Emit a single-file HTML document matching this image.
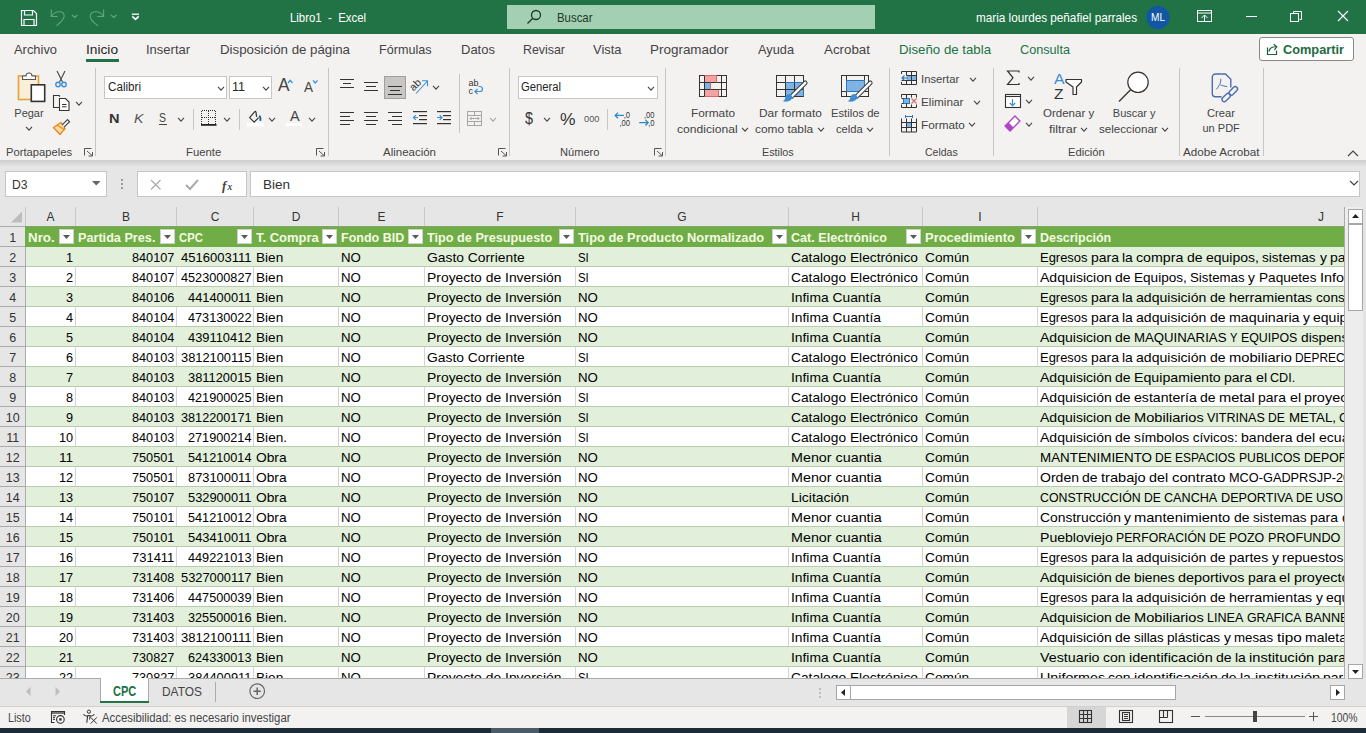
<!DOCTYPE html>
<html><head><meta charset="utf-8"><title>Libro1 - Excel</title>
<style>
html,body{margin:0;padding:0;width:1366px;height:733px;overflow:hidden;background:#F3F2F1;}
body{position:relative;font-family:"Liberation Sans",sans-serif;}
.r{position:absolute;}
.t{position:absolute;white-space:pre;line-height:1;transform-origin:0 0;}
.s{position:absolute;overflow:visible;}
</style></head><body>
<div class="r" style="left:0px;top:0px;width:1366px;height:34px;background:#217346;"></div>
<div class="r" style="left:0px;top:34px;width:1366px;height:126px;background:#F3F2F1;"></div>
<div class="r" style="left:0px;top:160px;width:1366px;height:66px;background:#E6E6E6;"></div>
<div class="r" style="left:0px;top:160px;width:1366px;height:7px;background:linear-gradient(#CDCDCD,#E6E6E6);"></div>
<div class="t" style="left:290.00px;top:10.50px;font-size:13px;color:#FFFFFF;transform:scaleX(0.8765);">Libro1  -  Excel</div>
<div class="r" style="left:507px;top:5px;width:368px;height:24px;background:#A3CFB3;"></div>
<svg class="s" style="left:526px;top:9px;" width="16" height="16" viewBox="0 0 16 16"><circle cx="10" cy="6" r="4.5" fill="none" stroke="#1E3B28" stroke-width="1.3"/><line x1="6.8" y1="9.2" x2="1.5" y2="14.5" stroke="#1E3B28" stroke-width="1.3"/></svg>
<div class="t" style="left:557.00px;top:10.50px;font-size:13px;color:#1E3B28;transform:scaleX(0.8774);">Buscar</div>
<div class="t" style="left:976.00px;top:11.00px;font-size:13px;color:#FFFFFF;transform:scaleX(0.9020);">maria lourdes peñafiel parrales</div>
<svg class="s" style="left:1146px;top:5px;" width="25" height="25" viewBox="0 0 25 25"><circle cx="12" cy="12.6" r="11.7" fill="#1257A3"/></svg>
<div class="t" style="left:1151.00px;top:11.89px;font-size:11px;color:#FFFFFF;transform:scaleX(0.9161);">ML</div>
<svg class="s" style="left:20px;top:9px;" width="18" height="18" viewBox="0 0 18 18"><path d="M1.5 1.5h12l3 3v12h-15z" fill="none" stroke="#fff" stroke-width="1.2"/><path d="M4.5 1.5v4.5h8v-4.5" fill="none" stroke="#fff" stroke-width="1.2"/><path d="M4 16.5v-6h10v6" fill="none" stroke="#fff" stroke-width="1.2"/></svg>
<svg class="s" style="left:50px;top:9px;" width="30" height="18" viewBox="0 0 30 18"><path d="M1.3 0.6V7.5H7.7" fill="none" stroke="#62A67F" stroke-width="1.1"/><path d="M1.8 7C5 1.5 14 1 14.2 7C14.3 10 10 14 6.5 16.8" fill="none" stroke="#62A67F" stroke-width="1.1"/><path d="M22 6l2.7 2.5l2.7-2.5" fill="none" stroke="#62A67F" stroke-width="1.2"/></svg>
<svg class="s" style="left:89px;top:9px;" width="30" height="18" viewBox="0 0 30 18"><path d="M14.6 0.6V7.5H8.3" fill="none" stroke="#62A67F" stroke-width="1.1"/><path d="M14.1 7C11 1.5 2 1 1.2 7C1.1 10 5 14 9 16.8" fill="none" stroke="#62A67F" stroke-width="1.1"/><path d="M22 6l2.7 2.5l2.7-2.5" fill="none" stroke="#62A67F" stroke-width="1.2"/></svg>
<svg class="s" style="left:130px;top:11px;" width="12" height="12" viewBox="0 0 12 12"><line x1="1.8" y1="3.2" x2="9" y2="3.2" stroke="#fff" stroke-width="1.3"/><path d="M2.3 5.3l3.2 3l3.2-3" fill="none" stroke="#fff" stroke-width="1.6"/></svg>
<svg class="s" style="left:1197px;top:10px;" width="16" height="13" viewBox="0 0 16 13"><rect x="0.5" y="0.5" width="14" height="11" fill="none" stroke="#fff" stroke-width="1"/><line x1="0.5" y1="3" x2="14.5" y2="3" stroke="#fff"/><path d="M4.5 8l3-3l3 3M7.5 5v6" fill="none" stroke="#fff" stroke-width="1"/></svg>
<div class="r" style="left:1246px;top:16px;width:11px;height:1px;background:#fff;"></div>
<svg class="s" style="left:1290px;top:10px;" width="13" height="13" viewBox="0 0 13 13"><rect x="0.5" y="3.5" width="8" height="8" fill="none" stroke="#fff"/><path d="M3.5 3.5v-2h8v8h-2" fill="none" stroke="#fff"/></svg>
<svg class="s" style="left:1337px;top:10px;" width="12" height="12" viewBox="0 0 12 12"><path d="M1 1l10 10M11 1l-10 10" stroke="#fff" stroke-width="1.2"/></svg>
<div class="t" style="left:14.00px;top:43.00px;font-size:13px;color:#444444;transform:scaleX(0.9919);">Archivo</div>
<div class="t" style="left:86.00px;top:43.00px;font-size:13px;color:#262626;transform:scaleX(1.0544);">Inicio</div>
<div class="t" style="left:146.00px;top:43.00px;font-size:13px;color:#444444;">Insertar</div>
<div class="t" style="left:220.00px;top:43.00px;font-size:13px;color:#444444;transform:scaleX(1.0220);">Disposición de página</div>
<div class="t" style="left:379.00px;top:43.00px;font-size:13px;color:#444444;transform:scaleX(0.9690);">Fórmulas</div>
<div class="t" style="left:461.00px;top:43.00px;font-size:13px;color:#444444;">Datos</div>
<div class="t" style="left:523.00px;top:43.00px;font-size:13px;color:#444444;transform:scaleX(0.9531);">Revisar</div>
<div class="t" style="left:593.00px;top:43.00px;font-size:13px;color:#444444;transform:scaleX(0.9942);">Vista</div>
<div class="t" style="left:650.00px;top:43.00px;font-size:13px;color:#444444;transform:scaleX(1.0346);">Programador</div>
<div class="t" style="left:758.00px;top:43.00px;font-size:13px;color:#444444;transform:scaleX(0.9829);">Ayuda</div>
<div class="t" style="left:824.00px;top:43.00px;font-size:13px;color:#444444;transform:scaleX(1.0267);">Acrobat</div>
<div class="t" style="left:899.00px;top:43.00px;font-size:13px;color:#217346;transform:scaleX(1.0184);">Diseño de tabla</div>
<div class="t" style="left:1020.00px;top:43.00px;font-size:13px;color:#217346;transform:scaleX(0.9745);">Consulta</div>
<div class="r" style="left:86px;top:59px;width:33px;height:3px;background:#217346;"></div>
<div class="r" style="left:1259px;top:37px;width:95px;height:24px;background:#FFFFFF;border:1px solid #8A8886;border-radius:3px;box-sizing:border-box;"></div>
<svg class="s" style="left:1266px;top:43px;" width="14" height="13" viewBox="0 0 14 13"><path d="M1.5 4.5v7h9v-4" fill="none" stroke="#1E5E3A" stroke-width="1.2"/><path d="M3 8.5C3.5 5 6 3.5 10.5 3.8M7.8 1.2l3 2.6-2.4 3" fill="none" stroke="#1E5E3A" stroke-width="1.2"/></svg>
<div class="t" style="left:1283.00px;top:42.87px;font-size:13.5px;color:#1E6B42;font-weight:bold;transform:scaleX(0.9456);">Compartir</div>
<div class="r" style="left:95px;top:68px;width:1px;height:88px;background:#C8C6C4;"></div>
<div class="r" style="left:328px;top:68px;width:1px;height:88px;background:#C8C6C4;"></div>
<div class="r" style="left:509px;top:68px;width:1px;height:88px;background:#C8C6C4;"></div>
<div class="r" style="left:665px;top:68px;width:1px;height:88px;background:#C8C6C4;"></div>
<div class="r" style="left:889px;top:68px;width:1px;height:88px;background:#C8C6C4;"></div>
<div class="r" style="left:993px;top:68px;width:1px;height:88px;background:#C8C6C4;"></div>
<div class="r" style="left:1179px;top:68px;width:1px;height:88px;background:#C8C6C4;"></div>
<div class="r" style="left:1263px;top:68px;width:1px;height:88px;background:#C8C6C4;"></div>
<div class="t" style="left:6.40px;top:146.89px;font-size:11px;color:#444444;transform:scaleX(1.0181);">Portapapeles</div>
<div class="t" style="left:185.50px;top:146.89px;font-size:11px;color:#444444;transform:scaleX(1.0278);">Fuente</div>
<div class="t" style="left:383.40px;top:146.89px;font-size:11px;color:#444444;transform:scaleX(1.0442);">Alineación</div>
<div class="t" style="left:559.60px;top:146.89px;font-size:11px;color:#444444;transform:scaleX(1.0096);">Número</div>
<div class="t" style="left:761.60px;top:146.89px;font-size:11px;color:#444444;transform:scaleX(0.9753);">Estilos</div>
<div class="t" style="left:924.60px;top:146.89px;font-size:11px;color:#444444;transform:scaleX(0.9550);">Celdas</div>
<div class="t" style="left:1067.60px;top:146.89px;font-size:11px;color:#444444;transform:scaleX(1.0200);">Edición</div>
<div class="t" style="left:1183.40px;top:146.89px;font-size:11px;color:#444444;transform:scaleX(1.0586);">Adobe Acrobat</div>
<svg class="s" style="left:84px;top:148px;" width="9" height="8" viewBox="0 0 9 8"><path d="M0.5 7.5V0.5H7.5" fill="none" stroke="#555" stroke-width="1"/><path d="M3 3L8 7.5M8.5 4v4h-4" fill="none" stroke="#555" stroke-width="1"/></svg>
<svg class="s" style="left:316px;top:148px;" width="9" height="8" viewBox="0 0 9 8"><path d="M0.5 7.5V0.5H7.5" fill="none" stroke="#555" stroke-width="1"/><path d="M3 3L8 7.5M8.5 4v4h-4" fill="none" stroke="#555" stroke-width="1"/></svg>
<svg class="s" style="left:498px;top:148px;" width="9" height="8" viewBox="0 0 9 8"><path d="M0.5 7.5V0.5H7.5" fill="none" stroke="#555" stroke-width="1"/><path d="M3 3L8 7.5M8.5 4v4h-4" fill="none" stroke="#555" stroke-width="1"/></svg>
<svg class="s" style="left:654px;top:148px;" width="9" height="8" viewBox="0 0 9 8"><path d="M0.5 7.5V0.5H7.5" fill="none" stroke="#555" stroke-width="1"/><path d="M3 3L8 7.5M8.5 4v4h-4" fill="none" stroke="#555" stroke-width="1"/></svg>
<svg class="s" style="left:1347px;top:150px;" width="12" height="7" viewBox="0 0 12 7"><path d="M1 6L6 1L11 6" fill="none" stroke="#444" stroke-width="1.2"/></svg>
<svg class="s" style="left:17px;top:71px;" width="30" height="32" viewBox="0 0 30 32">
<rect x="1.5" y="5" width="20" height="23.5" fill="#FCEFD9" stroke="#E4A23B" stroke-width="1.6"/>
<path d="M5.5 8.5V5h3.5a3 3 0 0 1 6 0h3.5v3.5z" fill="#FFFFFF" stroke="#555" stroke-width="1.1"/>
<rect x="14.3" y="13.8" width="13.4" height="16.6" fill="#FFFFFF" stroke="#333" stroke-width="1.6"/></svg>
<div class="t" style="left:14.30px;top:107.89px;font-size:11px;color:#444444;">Pegar</div>
<svg class="s" style="left:24.7px;top:126px;" width="8" height="5.2" viewBox="0 0 8 5.2"><path d="M1 1L4.0 4.2L7 1" fill="none" stroke="#444444" stroke-width="1.1"/></svg>
<svg class="s" style="left:54px;top:70px;" width="14" height="18" viewBox="0 0 14 18"><path d="M3 1L8.5 12M11 1L5.5 12" stroke="#444" stroke-width="1.1" fill="none"/>
<circle cx="4" cy="14.5" r="2.2" fill="none" stroke="#3C8ED6" stroke-width="1.4"/><circle cx="10" cy="14.5" r="2.2" fill="none" stroke="#3C8ED6" stroke-width="1.4"/></svg>
<svg class="s" style="left:52px;top:94px;" width="19" height="18" viewBox="0 0 19 18"><path d="M7.5 13.5H1.5V1.5H7l1 1" fill="none" stroke="#333" stroke-width="1.1"/>
<path d="M7.5 4.5h6l3.5 3.5v8.5h-9.5z" fill="#fff" stroke="#333" stroke-width="1.1"/><path d="M10 10.5h4.5M10 12.8h4.5" stroke="#333" stroke-width="1"/></svg>
<svg class="s" style="left:74.8px;top:101.2px;" width="8" height="5.2" viewBox="0 0 8 5.2"><path d="M1 1L4.0 4.2L7 1" fill="none" stroke="#444444" stroke-width="1.1"/></svg>
<svg class="s" style="left:52px;top:118px;" width="19" height="17" viewBox="0 0 19 17"><path d="M1.5 9.5L9 4.5l4 6l-5 6z" fill="#FAD9A8" stroke="#E48A1B" stroke-width="1.3"/>
<path d="M5 7l8 5" stroke="#E48A1B" stroke-width="1.1"/><path d="M10 7.2l5.5-5.5 2 2-5.5 5.5" fill="#fff" stroke="#444" stroke-width="1.2"/></svg>
<div class="r" style="left:104px;top:76px;width:123px;height:23px;background:#FFFFFF;box-sizing:border-box;border:1px solid #C8C6C4;"></div>
<div class="t" style="left:107.70px;top:80.92px;font-size:12.5px;color:#262626;transform:scaleX(0.9315);">Calibri</div>
<svg class="s" style="left:216.7px;top:85.5px;" width="8" height="5.2" viewBox="0 0 8 5.2"><path d="M1 1L4.0 4.2L7 1" fill="none" stroke="#444444" stroke-width="1.1"/></svg>
<div class="r" style="left:229px;top:76px;width:43px;height:23px;background:#FFFFFF;box-sizing:border-box;border:1px solid #C8C6C4;"></div>
<div class="t" style="left:232.00px;top:80.92px;font-size:12.5px;color:#262626;">11</div>
<svg class="s" style="left:261.8px;top:85.5px;" width="8" height="5.2" viewBox="0 0 8 5.2"><path d="M1 1L4.0 4.2L7 1" fill="none" stroke="#444444" stroke-width="1.1"/></svg>
<div class="t" style="left:277.50px;top:76.99px;font-size:17.5px;color:#444444;transform:scaleX(0.9852);">A</div>
<svg class="s" style="left:287px;top:79px;" width="7" height="5" viewBox="0 0 7 5"><path d="M1 4L3.2 1.3L5.5 4" fill="none" stroke="#3C8ED6" stroke-width="1.2"/></svg>
<div class="t" style="left:303.50px;top:79.95px;font-size:14px;color:#444444;transform:scaleX(0.9638);">A</div>
<svg class="s" style="left:311.5px;top:79px;" width="7" height="5" viewBox="0 0 7 5"><path d="M1 1.3L3.2 4L5.5 1.3" fill="none" stroke="#3C8ED6" stroke-width="1.2"/></svg>
<div class="t" style="left:109.20px;top:111.70px;font-size:13px;color:#333;font-weight:bold;transform:scaleX(1.1184);">N</div>
<div class="t" style="left:134.20px;top:111.70px;font-size:13px;color:#555;transform:scaleX(1.0956);font-style:italic;">K</div>
<div class="t" style="left:159.30px;top:112.12px;font-size:12.5px;color:#444;transform:scaleX(0.8395);">S</div>
<div class="r" style="left:159px;top:124px;width:8px;height:1px;background:#444;"></div>
<svg class="s" style="left:176.7px;top:116.8px;" width="8" height="5.2" viewBox="0 0 8 5.2"><path d="M1 1L4.0 4.2L7 1" fill="none" stroke="#444444" stroke-width="1.1"/></svg>
<div class="r" style="left:193px;top:109px;width:1px;height:21px;background:#C8C6C4;"></div>
<svg class="s" style="left:201px;top:110px;" width="16" height="17" viewBox="0 0 16 17"><g stroke="#333" stroke-width="1" stroke-dasharray="1 1" fill="none">
<path d="M0.5 1V14M14.5 1V14M1 0.5H15M7.5 1V14M1 7.5H15"/></g><rect x="0" y="14" width="15.5" height="1.8" fill="#222"/></svg>
<svg class="s" style="left:222.9px;top:116.8px;" width="8" height="5.2" viewBox="0 0 8 5.2"><path d="M1 1L4.0 4.2L7 1" fill="none" stroke="#444444" stroke-width="1.1"/></svg>
<div class="r" style="left:239px;top:109px;width:1px;height:21px;background:#C8C6C4;"></div>
<svg class="s" style="left:247px;top:110px;" width="18" height="18" viewBox="0 0 18 18"><path d="M9.6 6.8L9 2.2Q8.6 0.9 7.6 1.8L2.6 7.6L7.2 12.1L11.6 7.6" fill="none" stroke="#333" stroke-width="1.2" stroke-linejoin="round"/>
<path d="M12.2 5.8Q13.8 6.8 13.4 10.8" fill="none" stroke="#1F5F99" stroke-width="1.8"/><rect x="0" y="13" width="16.5" height="3.5" fill="#FFFFFF"/></svg>
<svg class="s" style="left:268.3px;top:116.8px;" width="8" height="5.2" viewBox="0 0 8 5.2"><path d="M1 1L4.0 4.2L7 1" fill="none" stroke="#444444" stroke-width="1.1"/></svg>
<div class="t" style="left:289.60px;top:109.33px;font-size:14.5px;color:#444444;transform:scaleX(0.9926);">A</div>
<div class="r" style="left:286px;top:123px;width:16px;height:3px;background:#FFFFFF;"></div>
<svg class="s" style="left:307.7px;top:116.8px;" width="8" height="5.2" viewBox="0 0 8 5.2"><path d="M1 1L4.0 4.2L7 1" fill="none" stroke="#444444" stroke-width="1.1"/></svg>
<div class="r" style="left:340px;top:79px;width:14px;height:1px;background:#333;"></div>
<div class="r" style="left:343px;top:83px;width:8px;height:1px;background:#333;"></div>
<div class="r" style="left:340px;top:87px;width:14px;height:1px;background:#333;"></div>
<div class="r" style="left:364px;top:82px;width:14px;height:1px;background:#333;"></div>
<div class="r" style="left:366px;top:86px;width:10px;height:1px;background:#333;"></div>
<div class="r" style="left:364px;top:90px;width:14px;height:1px;background:#333;"></div>
<div class="r" style="left:384px;top:76px;width:22px;height:23px;background:#C8C6C4;box-sizing:border-box;border:1px solid #A19F9D;"></div>
<div class="r" style="left:388px;top:86px;width:14px;height:1px;background:#333;"></div>
<div class="r" style="left:390px;top:90px;width:10px;height:1px;background:#333;"></div>
<div class="r" style="left:388px;top:94px;width:14px;height:1px;background:#333;"></div>
<svg class="s" style="left:411px;top:77px;" width="28" height="19" viewBox="0 0 28 19"><text x="0" y="0" transform="translate(2.5 14.5) rotate(-45)" font-family="Liberation Sans" font-size="10.5" fill="#333">ab</text>
<path d="M5 16.5L16 4.5M11 3.8h5.5v5.5" fill="none" stroke="#3C8ED6" stroke-width="1.1"/></svg>
<svg class="s" style="left:431.6px;top:85px;" width="8" height="5.2" viewBox="0 0 8 5.2"><path d="M1 1L4.0 4.2L7 1" fill="none" stroke="#444444" stroke-width="1.1"/></svg>
<div class="r" style="left:459px;top:74px;width:1px;height:59px;background:#C8C6C4;"></div>
<svg class="s" style="left:467px;top:78px;" width="18" height="18" viewBox="0 0 18 18"><text x="1.5" y="8" font-family="Liberation Sans" font-size="9" fill="#333">ab</text><text x="1.5" y="16" font-family="Liberation Sans" font-size="9" fill="#333">c</text>
<path d="M8.5 13.5H13a2.5 2.5 0 0 0 0-5h-1.5M10.5 11l-2.5 2.5 2.5 2.5" fill="none" stroke="#3C8ED6" stroke-width="1.2"/></svg>
<div class="r" style="left:340px;top:112px;width:14px;height:1px;background:#333;"></div>
<div class="r" style="left:340px;top:116px;width:10px;height:1px;background:#333;"></div>
<div class="r" style="left:340px;top:120px;width:14px;height:1px;background:#333;"></div>
<div class="r" style="left:340px;top:124px;width:10px;height:1px;background:#333;"></div>
<div class="r" style="left:364px;top:112px;width:14px;height:1px;background:#333;"></div>
<div class="r" style="left:366px;top:116px;width:10px;height:1px;background:#333;"></div>
<div class="r" style="left:364px;top:120px;width:14px;height:1px;background:#333;"></div>
<div class="r" style="left:366px;top:124px;width:10px;height:1px;background:#333;"></div>
<div class="r" style="left:388px;top:112px;width:14px;height:1px;background:#333;"></div>
<div class="r" style="left:392px;top:116px;width:10px;height:1px;background:#333;"></div>
<div class="r" style="left:388px;top:120px;width:14px;height:1px;background:#333;"></div>
<div class="r" style="left:392px;top:124px;width:10px;height:1px;background:#333;"></div>
<svg class="s" style="left:413px;top:111px;" width="15" height="15" viewBox="0 0 15 15"><rect x="0" y="0" width="14" height="1.2" fill="#333"/><rect x="6" y="4" width="8" height="1.2" fill="#333"/><rect x="6" y="8" width="8" height="1.2" fill="#333"/><rect x="0" y="12" width="14" height="1.2" fill="#333"/>
<path d="M5 6.5H0.5M2.8 4.2L0.5 6.5l2.3 2.3" fill="none" stroke="#3C8ED6" stroke-width="1.2"/></svg>
<svg class="s" style="left:437px;top:111px;" width="15" height="15" viewBox="0 0 15 15"><rect x="0" y="0" width="14" height="1.2" fill="#333"/><rect x="6" y="4" width="8" height="1.2" fill="#333"/><rect x="6" y="8" width="8" height="1.2" fill="#333"/><rect x="0" y="12" width="14" height="1.2" fill="#333"/>
<path d="M0 6.5H5M2.7 4.2L5 6.5l-2.3 2.3" fill="none" stroke="#3C8ED6" stroke-width="1.2"/></svg>
<svg class="s" style="left:466px;top:110px;" width="17" height="17" viewBox="0 0 17 17"><rect x="1.5" y="1.5" width="14" height="14" fill="#F3F2F1" stroke="#A6A6A6"/><path d="M1.5 5.5h14M1.5 11.5h14M8.5 1.5v4M8.5 11.5v4" stroke="#A6A6A6"/>
<path d="M4 8.5h9M5.5 7l-1.5 1.5 1.5 1.5M11.5 7l1.5 1.5-1.5 1.5" fill="none" stroke="#A6A6A6"/></svg>
<svg class="s" style="left:488.6px;top:116.5px;" width="8" height="5.2" viewBox="0 0 8 5.2"><path d="M1 1L4.0 4.2L7 1" fill="none" stroke="#A6A6A6" stroke-width="1.1"/></svg>
<div class="r" style="left:518px;top:76px;width:140px;height:23px;background:#FFFFFF;box-sizing:border-box;border:1px solid #C8C6C4;"></div>
<div class="t" style="left:521.40px;top:80.72px;font-size:12.5px;color:#262626;transform:scaleX(0.8994);">General</div>
<svg class="s" style="left:647.2px;top:85.5px;" width="8" height="5.2" viewBox="0 0 8 5.2"><path d="M1 1L4.0 4.2L7 1" fill="none" stroke="#444444" stroke-width="1.1"/></svg>
<div class="t" style="left:524.50px;top:110.11px;font-size:17px;color:#333;transform:scaleX(0.8461);">$</div>
<svg class="s" style="left:542.9px;top:117px;" width="8" height="5.2" viewBox="0 0 8 5.2"><path d="M1 1L4.0 4.2L7 1" fill="none" stroke="#444444" stroke-width="1.1"/></svg>
<div class="t" style="left:559.50px;top:111.11px;font-size:17px;color:#333;transform:scaleX(1.0254);">%</div>
<div class="t" style="left:583.90px;top:113.96px;font-size:9.5px;color:#555;transform:scaleX(0.9779);">000</div>
<div class="r" style="left:607px;top:109px;width:1px;height:21px;background:#C8C6C4;"></div>
<svg class="s" style="left:613px;top:110px;" width="19" height="17" viewBox="0 0 19 17"><path d="M10.9 5.4H2.3M5 2.6L2.2 5.4L5 8.2" fill="none" stroke="#2B88C0" stroke-width="1.3"/>
<text transform="translate(10.7 7.8) scale(0.8 1)" font-family="Liberation Sans" font-size="9.5" fill="#333">,0</text><text transform="translate(6.5 15.7) scale(0.8 1)" font-family="Liberation Sans" font-size="9.5" fill="#333">,00</text></svg>
<svg class="s" style="left:638px;top:110px;" width="19" height="17" viewBox="0 0 19 17"><text transform="translate(6 7.8) scale(0.8 1)" font-family="Liberation Sans" font-size="9.5" fill="#333">,00</text><text transform="translate(10.2 15.7) scale(0.8 1)" font-family="Liberation Sans" font-size="9.5" fill="#333">,0</text>
<path d="M1.2 12.7H10.2M7.4 9.9L10.2 12.7L7.4 15.5" fill="none" stroke="#2B88C0" stroke-width="1.3"/></svg>
<svg class="s" style="left:698px;top:74px;" width="30" height="24" viewBox="0 0 30 24">
<rect x="6.5" y="1.5" width="12" height="7" fill="#F4A3A3"/><rect x="6.5" y="15.5" width="14" height="7" fill="#F4A3A3"/>
<rect x="6.5" y="8.5" width="6" height="7" fill="#7EB3E3"/>
<g fill="none" stroke="#333" stroke-width="1"><rect x="1.5" y="1.5" width="27" height="21"/><path d="M6.5 1.5v21M18.5 1.5v7M20.5 15.5v7M23.5 1.5v21M1.5 8.5h27M1.5 15.5h27"/></g>
<g fill="none" stroke="#E06666" stroke-width="1"><path d="M6.5 1.5h12v7M6.5 22.5h14v-7M12.5 8.5v7"/></g></svg>
<div class="t" style="left:690.80px;top:107.89px;font-size:11px;color:#444444;transform:scaleX(1.0743);">Formato</div>
<div class="t" style="left:676.70px;top:123.69px;font-size:11px;color:#444444;transform:scaleX(1.1010);">condicional</div>
<svg class="s" style="left:741px;top:127px;" width="8" height="5.2" viewBox="0 0 8 5.2"><path d="M1 1L4.0 4.2L7 1" fill="none" stroke="#444444" stroke-width="1.1"/></svg>
<svg class="s" style="left:775px;top:74px;" width="34" height="30" viewBox="0 0 34 30">
<rect x="10.5" y="8.5" width="18" height="14" fill="#7EB3E3"/>
<g fill="none" stroke="#333" stroke-width="1"><rect x="1.5" y="1.5" width="27" height="21"/><path d="M10.5 1.5v21M19.5 1.5v21M1.5 8.5h27M1.5 15.5h27"/></g>
<path d="M10.5 8.5h18v14" fill="none" stroke="#2E75B6" stroke-width="1"/>
<path d="M30.3 8.8L16.5 22.6" stroke="#444" stroke-width="4.6" stroke-linecap="round"/><path d="M30.3 8.8L16.5 22.6" stroke="#fff" stroke-width="2.4" stroke-linecap="round"/>
<path d="M15.8 20.2C12.5 19.5 10.5 21.5 10 24.5C9.6 26 8.8 26.8 7.8 27.3C11 28.2 15.5 27.8 17.8 23.5z" fill="#3C8ED6"/></svg>
<div class="t" style="left:758.60px;top:107.89px;font-size:11px;color:#444444;transform:scaleX(1.0814);">Dar formato</div>
<div class="t" style="left:754.80px;top:123.69px;font-size:11px;color:#444444;transform:scaleX(1.0816);">como tabla</div>
<svg class="s" style="left:816.8px;top:127px;" width="8" height="5.2" viewBox="0 0 8 5.2"><path d="M1 1L4.0 4.2L7 1" fill="none" stroke="#444444" stroke-width="1.1"/></svg>
<svg class="s" style="left:840px;top:74px;" width="34" height="30" viewBox="0 0 34 30">
<rect x="6.5" y="6.5" width="18" height="11" fill="#7EB3E3"/>
<g fill="none" stroke="#333" stroke-width="1"><rect x="1.5" y="1.5" width="27" height="21"/><path d="M6.5 1.5v21M24.5 1.5v5M1.5 17.5h27"/></g>
<rect x="6.5" y="6.5" width="18" height="11" fill="none" stroke="#2E75B6" stroke-width="1"/>
<path d="M30.3 8.8L16.5 22.6" stroke="#444" stroke-width="4.6" stroke-linecap="round"/><path d="M30.3 8.8L16.5 22.6" stroke="#fff" stroke-width="2.4" stroke-linecap="round"/>
<path d="M15.8 20.2C12.5 19.5 10.5 21.5 10 24.5C9.6 26 8.8 26.8 7.8 27.3C11 28.2 15.5 27.8 17.8 23.5z" fill="#3C8ED6"/></svg>
<div class="t" style="left:830.60px;top:107.89px;font-size:11px;color:#444444;transform:scaleX(1.0191);">Estilos de</div>
<div class="t" style="left:835.70px;top:123.69px;font-size:11px;color:#444444;transform:scaleX(1.0153);">celda</div>
<svg class="s" style="left:866.2px;top:127px;" width="8" height="5.2" viewBox="0 0 8 5.2"><path d="M1 1L4.0 4.2L7 1" fill="none" stroke="#444444" stroke-width="1.1"/></svg>
<svg class="s" style="left:900px;top:70px;" width="18" height="16" viewBox="0 0 18 16"><rect x="6.5" y="5.5" width="10" height="5" fill="#7EB3E3"/>
<g fill="none" stroke="#333" stroke-width="1"><path d="M1.5 4V1.5h15v13h-15V12M6.5 1.5v4M11.5 1.5v13M6.5 10.5v4M6.5 5.5h10M1.5 10.5h15"/></g>
<path d="M8 8H2M4.5 5.5L2 8L4.5 10.5" fill="none" stroke="#2E75B6" stroke-width="1.2"/></svg>
<div class="t" style="left:920.50px;top:74.09px;font-size:11px;color:#444444;transform:scaleX(1.0243);">Insertar</div>
<svg class="s" style="left:968.8px;top:76.5px;" width="8" height="5.2" viewBox="0 0 8 5.2"><path d="M1 1L4.0 4.2L7 1" fill="none" stroke="#444444" stroke-width="1.1"/></svg>
<svg class="s" style="left:900px;top:93px;" width="18" height="16" viewBox="0 0 18 16"><rect x="3.5" y="5.5" width="6" height="5" fill="#7EB3E3" stroke="#2E75B6" stroke-width="1"/>
<g fill="none" stroke="#333" stroke-width="1"><path d="M1.5 4.5V1.5h15v3M1.5 11.5v3h15v-3M6.5 1.5v4M11.5 1.5v3M6.5 10.5v4M11.5 11.5v3M1.5 5.5h2M1.5 10.5h2"/></g>
<path d="M11.5 5.5l5 5M16.5 5.5l-5 5" stroke="#E06666" stroke-width="1.1"/></svg>
<div class="t" style="left:920.50px;top:96.99px;font-size:11px;color:#444444;transform:scaleX(1.0671);">Eliminar</div>
<svg class="s" style="left:973px;top:99.5px;" width="8" height="5.2" viewBox="0 0 8 5.2"><path d="M1 1L4.0 4.2L7 1" fill="none" stroke="#444444" stroke-width="1.1"/></svg>
<svg class="s" style="left:900px;top:114px;" width="18" height="19" viewBox="0 0 18 19"><rect x="6.5" y="8.5" width="5" height="5" fill="#7EB3E3"/>
<g fill="none" stroke="#333" stroke-width="1"><path d="M1.5 4.5v13.5h15v-13.5M6.5 4.5v13.5M11.5 4.5v13.5M1.5 8.5h15M1.5 13.5h15"/></g>
<path d="M5 2.5h8M5.5 1v3M12.5 1v3" stroke="#2E75B6" stroke-width="1"/></svg>
<div class="t" style="left:920.50px;top:119.99px;font-size:11px;color:#444444;transform:scaleX(1.0694);">Formato</div>
<svg class="s" style="left:968px;top:122px;" width="8" height="5.2" viewBox="0 0 8 5.2"><path d="M1 1L4.0 4.2L7 1" fill="none" stroke="#444444" stroke-width="1.1"/></svg>
<svg class="s" style="left:1006px;top:70px;" width="14" height="16" viewBox="0 0 14 16"><path d="M13 2.5V1H1.5L7 7.8L1.5 14.5H13V13" fill="none" stroke="#333" stroke-width="1.2"/></svg>
<svg class="s" style="left:1026.7px;top:76px;" width="8" height="5.2" viewBox="0 0 8 5.2"><path d="M1 1L4.0 4.2L7 1" fill="none" stroke="#444444" stroke-width="1.1"/></svg>
<svg class="s" style="left:1004px;top:93px;" width="18" height="16" viewBox="0 0 18 16"><rect x="1.5" y="1.5" width="15" height="13" fill="#fff" stroke="#333" stroke-width="1.1"/><path d="M1.5 3.5h15" stroke="#333" stroke-width="1.1"/>
<path d="M8.5 6v6.5M5.8 10l2.7 2.7l2.7-2.7" fill="none" stroke="#3C8ED6" stroke-width="1.2"/></svg>
<svg class="s" style="left:1024.8px;top:99px;" width="8" height="5.2" viewBox="0 0 8 5.2"><path d="M1 1L4.0 4.2L7 1" fill="none" stroke="#444444" stroke-width="1.1"/></svg>
<svg class="s" style="left:1003px;top:114px;" width="19" height="19" viewBox="0 0 19 19"><g transform="rotate(-45 9.5 9.5)"><rect x="2.5" y="6" width="14" height="7" fill="#fff" stroke="#B146C2" stroke-width="1.4"/><rect x="2.5" y="6" width="5" height="7" fill="#B146C2"/></g></svg>
<svg class="s" style="left:1024.8px;top:122px;" width="8" height="5.2" viewBox="0 0 8 5.2"><path d="M1 1L4.0 4.2L7 1" fill="none" stroke="#444444" stroke-width="1.1"/></svg>
<div class="t" style="left:1053.80px;top:71.48px;font-size:15.5px;color:#3C8ED6;transform:scaleX(1.0156);">A</div>
<div class="t" style="left:1054.00px;top:85.88px;font-size:15.5px;color:#333;">Z</div>
<svg class="s" style="left:1065px;top:78px;" width="18" height="18" viewBox="0 0 18 18"><path d="M1 1.5h15.5v2.5L11.5 9v7.5h-3.5V9L1 4z" fill="#fff" stroke="#333" stroke-width="1.2" stroke-linejoin="round"/></svg>
<div class="t" style="left:1042.50px;top:107.99px;font-size:11px;color:#444444;transform:scaleX(1.0468);">Ordenar y</div>
<div class="t" style="left:1048.80px;top:123.99px;font-size:11px;color:#444444;transform:scaleX(1.1454);">filtrar</div>
<svg class="s" style="left:1079.8px;top:127.30000000000001px;" width="8" height="5.2" viewBox="0 0 8 5.2"><path d="M1 1L4.0 4.2L7 1" fill="none" stroke="#444444" stroke-width="1.1"/></svg>
<svg class="s" style="left:1117px;top:70px;" width="34" height="33" viewBox="0 0 34 33"><circle cx="21" cy="12.3" r="10.2" fill="#fff" stroke="#333" stroke-width="1.2"/><path d="M13.8 19.5L2 31.5" stroke="#333" stroke-width="1.3"/></svg>
<div class="t" style="left:1112.80px;top:107.99px;font-size:11px;color:#444444;">Buscar y</div>
<div class="t" style="left:1099.30px;top:123.99px;font-size:11px;color:#444444;transform:scaleX(1.0550);">seleccionar</div>
<svg class="s" style="left:1161px;top:127.30000000000001px;" width="8" height="5.2" viewBox="0 0 8 5.2"><path d="M1 1L4.0 4.2L7 1" fill="none" stroke="#444444" stroke-width="1.1"/></svg>
<svg class="s" style="left:1210px;top:73px;" width="30" height="30" viewBox="0 0 30 30"><path d="M11.6 23.7H5.3a3 3 0 0 1-3-3V4a3 3 0 0 1 3-3H15.5L20.8 6.3V14.5" fill="none" stroke="#4A6EB0" stroke-width="1.4"/>
<path d="M10.7 5.9C10.9 9 10.5 11 6.4 16.3M10.5 11.8C12 12.5 14 13.2 17.3 13.6" fill="none" stroke="#4A6EB0" stroke-width="1"/>
<g fill="none" stroke="#4A6EB0" stroke-width="1.4"><rect x="11.2" y="22.2" width="10" height="4.6" rx="2.3" transform="rotate(-45 16.2 24.5)"/><rect x="18.3" y="15.6" width="10" height="4.6" rx="2.3" transform="rotate(-45 23.3 17.9)"/></g></svg>
<div class="t" style="left:1207.00px;top:107.99px;font-size:11px;color:#444444;transform:scaleX(1.0179);">Crear</div>
<div class="t" style="left:1202.50px;top:123.39px;font-size:11px;color:#444444;">un PDF</div>
<div class="t" style="left:46.50px;top:210.84px;font-size:12px;color:#333333;">A</div>
<div class="t" style="left:122.00px;top:210.84px;font-size:12px;color:#333333;">B</div>
<div class="t" style="left:210.67px;top:210.84px;font-size:12px;color:#333333;">C</div>
<div class="t" style="left:291.67px;top:210.84px;font-size:12px;color:#333333;">D</div>
<div class="t" style="left:377.50px;top:210.84px;font-size:12px;color:#333333;">E</div>
<div class="t" style="left:496.33px;top:210.84px;font-size:12px;color:#333333;">F</div>
<div class="t" style="left:677.33px;top:210.84px;font-size:12px;color:#333333;">G</div>
<div class="t" style="left:851.17px;top:210.84px;font-size:12px;color:#333333;">H</div>
<div class="t" style="left:978.33px;top:210.84px;font-size:12px;color:#333333;">I</div>
<div class="t" style="left:1318.00px;top:210.84px;font-size:12px;color:#333333;">J</div>
<div class="r" style="left:25px;top:207px;width:1px;height:19px;background:#C8C8C8;"></div>
<div class="r" style="left:75px;top:207px;width:1px;height:19px;background:#C8C8C8;"></div>
<div class="r" style="left:176px;top:207px;width:1px;height:19px;background:#C8C8C8;"></div>
<div class="r" style="left:253px;top:207px;width:1px;height:19px;background:#C8C8C8;"></div>
<div class="r" style="left:338px;top:207px;width:1px;height:19px;background:#C8C8C8;"></div>
<div class="r" style="left:424px;top:207px;width:1px;height:19px;background:#C8C8C8;"></div>
<div class="r" style="left:575px;top:207px;width:1px;height:19px;background:#C8C8C8;"></div>
<div class="r" style="left:788px;top:207px;width:1px;height:19px;background:#C8C8C8;"></div>
<div class="r" style="left:922px;top:207px;width:1px;height:19px;background:#C8C8C8;"></div>
<div class="r" style="left:1037px;top:207px;width:1px;height:19px;background:#C8C8C8;"></div>
<div class="r" style="left:0px;top:226px;width:1345px;height:1px;background:#ABABAB;"></div>
<svg class="s" style="left:10px;top:211px;" width="13" height="12" viewBox="0 0 13 12"><path d="M12 0.5V11.5H1z" fill="#BDBDBD"/></svg>
<div class="r" style="left:0;top:227px;width:1345px;height:451px;background:#fff">
<div class="r" style="left:0px;top:0px;width:25px;height:451px;background:#E6E6E6;"></div>
<div class="r" style="left:25px;top:0px;width:1px;height:451px;background:#ABABAB;"></div>
<div class="r" style="left:0px;top:19px;width:25px;height:1px;background:#ABABAB;"></div>
<div class="r" style="left:0px;top:39px;width:25px;height:1px;background:#ABABAB;"></div>
<div class="r" style="left:0px;top:59px;width:25px;height:1px;background:#ABABAB;"></div>
<div class="r" style="left:0px;top:79px;width:25px;height:1px;background:#ABABAB;"></div>
<div class="r" style="left:0px;top:99px;width:25px;height:1px;background:#ABABAB;"></div>
<div class="r" style="left:0px;top:119px;width:25px;height:1px;background:#ABABAB;"></div>
<div class="r" style="left:0px;top:139px;width:25px;height:1px;background:#ABABAB;"></div>
<div class="r" style="left:0px;top:159px;width:25px;height:1px;background:#ABABAB;"></div>
<div class="r" style="left:0px;top:179px;width:25px;height:1px;background:#ABABAB;"></div>
<div class="r" style="left:0px;top:199px;width:25px;height:1px;background:#ABABAB;"></div>
<div class="r" style="left:0px;top:219px;width:25px;height:1px;background:#ABABAB;"></div>
<div class="r" style="left:0px;top:239px;width:25px;height:1px;background:#ABABAB;"></div>
<div class="r" style="left:0px;top:259px;width:25px;height:1px;background:#ABABAB;"></div>
<div class="r" style="left:0px;top:279px;width:25px;height:1px;background:#ABABAB;"></div>
<div class="r" style="left:0px;top:299px;width:25px;height:1px;background:#ABABAB;"></div>
<div class="r" style="left:0px;top:319px;width:25px;height:1px;background:#ABABAB;"></div>
<div class="r" style="left:0px;top:339px;width:25px;height:1px;background:#ABABAB;"></div>
<div class="r" style="left:0px;top:359px;width:25px;height:1px;background:#ABABAB;"></div>
<div class="r" style="left:0px;top:379px;width:25px;height:1px;background:#ABABAB;"></div>
<div class="r" style="left:0px;top:399px;width:25px;height:1px;background:#ABABAB;"></div>
<div class="r" style="left:0px;top:419px;width:25px;height:1px;background:#ABABAB;"></div>
<div class="r" style="left:0px;top:439px;width:25px;height:1px;background:#ABABAB;"></div>
<div class="r" style="left:0px;top:459px;width:25px;height:1px;background:#ABABAB;"></div>
<div class="r" style="left:25px;top:-1px;width:1320px;height:21px;background:#70AD47;"></div>
<div class="r" style="left:25px;top:-1px;width:1320px;height:1px;background:#7FA56A;"></div>
<div class="r" style="left:26px;top:20px;width:1319px;height:19px;background:#E2EFDA;"></div>
<div class="r" style="left:26px;top:39px;width:1319px;height:1px;background:#B9CCAB;"></div>
<div class="r" style="left:75px;top:40px;width:1px;height:19px;background:#D4D4D4;"></div>
<div class="r" style="left:176px;top:40px;width:1px;height:19px;background:#D4D4D4;"></div>
<div class="r" style="left:253px;top:40px;width:1px;height:19px;background:#D4D4D4;"></div>
<div class="r" style="left:338px;top:40px;width:1px;height:19px;background:#D4D4D4;"></div>
<div class="r" style="left:424px;top:40px;width:1px;height:19px;background:#D4D4D4;"></div>
<div class="r" style="left:575px;top:40px;width:1px;height:19px;background:#D4D4D4;"></div>
<div class="r" style="left:788px;top:40px;width:1px;height:19px;background:#D4D4D4;"></div>
<div class="r" style="left:922px;top:40px;width:1px;height:19px;background:#D4D4D4;"></div>
<div class="r" style="left:1037px;top:40px;width:1px;height:19px;background:#D4D4D4;"></div>
<div class="r" style="left:26px;top:59px;width:1319px;height:1px;background:#B9CCAB;"></div>
<div class="r" style="left:26px;top:60px;width:1319px;height:19px;background:#E2EFDA;"></div>
<div class="r" style="left:26px;top:79px;width:1319px;height:1px;background:#B9CCAB;"></div>
<div class="r" style="left:75px;top:80px;width:1px;height:19px;background:#D4D4D4;"></div>
<div class="r" style="left:176px;top:80px;width:1px;height:19px;background:#D4D4D4;"></div>
<div class="r" style="left:253px;top:80px;width:1px;height:19px;background:#D4D4D4;"></div>
<div class="r" style="left:338px;top:80px;width:1px;height:19px;background:#D4D4D4;"></div>
<div class="r" style="left:424px;top:80px;width:1px;height:19px;background:#D4D4D4;"></div>
<div class="r" style="left:575px;top:80px;width:1px;height:19px;background:#D4D4D4;"></div>
<div class="r" style="left:788px;top:80px;width:1px;height:19px;background:#D4D4D4;"></div>
<div class="r" style="left:922px;top:80px;width:1px;height:19px;background:#D4D4D4;"></div>
<div class="r" style="left:1037px;top:80px;width:1px;height:19px;background:#D4D4D4;"></div>
<div class="r" style="left:26px;top:99px;width:1319px;height:1px;background:#B9CCAB;"></div>
<div class="r" style="left:26px;top:100px;width:1319px;height:19px;background:#E2EFDA;"></div>
<div class="r" style="left:26px;top:119px;width:1319px;height:1px;background:#B9CCAB;"></div>
<div class="r" style="left:75px;top:120px;width:1px;height:19px;background:#D4D4D4;"></div>
<div class="r" style="left:176px;top:120px;width:1px;height:19px;background:#D4D4D4;"></div>
<div class="r" style="left:253px;top:120px;width:1px;height:19px;background:#D4D4D4;"></div>
<div class="r" style="left:338px;top:120px;width:1px;height:19px;background:#D4D4D4;"></div>
<div class="r" style="left:424px;top:120px;width:1px;height:19px;background:#D4D4D4;"></div>
<div class="r" style="left:575px;top:120px;width:1px;height:19px;background:#D4D4D4;"></div>
<div class="r" style="left:788px;top:120px;width:1px;height:19px;background:#D4D4D4;"></div>
<div class="r" style="left:922px;top:120px;width:1px;height:19px;background:#D4D4D4;"></div>
<div class="r" style="left:1037px;top:120px;width:1px;height:19px;background:#D4D4D4;"></div>
<div class="r" style="left:26px;top:139px;width:1319px;height:1px;background:#B9CCAB;"></div>
<div class="r" style="left:26px;top:140px;width:1319px;height:19px;background:#E2EFDA;"></div>
<div class="r" style="left:26px;top:159px;width:1319px;height:1px;background:#B9CCAB;"></div>
<div class="r" style="left:75px;top:160px;width:1px;height:19px;background:#D4D4D4;"></div>
<div class="r" style="left:176px;top:160px;width:1px;height:19px;background:#D4D4D4;"></div>
<div class="r" style="left:253px;top:160px;width:1px;height:19px;background:#D4D4D4;"></div>
<div class="r" style="left:338px;top:160px;width:1px;height:19px;background:#D4D4D4;"></div>
<div class="r" style="left:424px;top:160px;width:1px;height:19px;background:#D4D4D4;"></div>
<div class="r" style="left:575px;top:160px;width:1px;height:19px;background:#D4D4D4;"></div>
<div class="r" style="left:788px;top:160px;width:1px;height:19px;background:#D4D4D4;"></div>
<div class="r" style="left:922px;top:160px;width:1px;height:19px;background:#D4D4D4;"></div>
<div class="r" style="left:1037px;top:160px;width:1px;height:19px;background:#D4D4D4;"></div>
<div class="r" style="left:26px;top:179px;width:1319px;height:1px;background:#B9CCAB;"></div>
<div class="r" style="left:26px;top:180px;width:1319px;height:19px;background:#E2EFDA;"></div>
<div class="r" style="left:26px;top:199px;width:1319px;height:1px;background:#B9CCAB;"></div>
<div class="r" style="left:75px;top:200px;width:1px;height:19px;background:#D4D4D4;"></div>
<div class="r" style="left:176px;top:200px;width:1px;height:19px;background:#D4D4D4;"></div>
<div class="r" style="left:253px;top:200px;width:1px;height:19px;background:#D4D4D4;"></div>
<div class="r" style="left:338px;top:200px;width:1px;height:19px;background:#D4D4D4;"></div>
<div class="r" style="left:424px;top:200px;width:1px;height:19px;background:#D4D4D4;"></div>
<div class="r" style="left:575px;top:200px;width:1px;height:19px;background:#D4D4D4;"></div>
<div class="r" style="left:788px;top:200px;width:1px;height:19px;background:#D4D4D4;"></div>
<div class="r" style="left:922px;top:200px;width:1px;height:19px;background:#D4D4D4;"></div>
<div class="r" style="left:1037px;top:200px;width:1px;height:19px;background:#D4D4D4;"></div>
<div class="r" style="left:26px;top:219px;width:1319px;height:1px;background:#B9CCAB;"></div>
<div class="r" style="left:26px;top:220px;width:1319px;height:19px;background:#E2EFDA;"></div>
<div class="r" style="left:26px;top:239px;width:1319px;height:1px;background:#B9CCAB;"></div>
<div class="r" style="left:75px;top:240px;width:1px;height:19px;background:#D4D4D4;"></div>
<div class="r" style="left:176px;top:240px;width:1px;height:19px;background:#D4D4D4;"></div>
<div class="r" style="left:253px;top:240px;width:1px;height:19px;background:#D4D4D4;"></div>
<div class="r" style="left:338px;top:240px;width:1px;height:19px;background:#D4D4D4;"></div>
<div class="r" style="left:424px;top:240px;width:1px;height:19px;background:#D4D4D4;"></div>
<div class="r" style="left:575px;top:240px;width:1px;height:19px;background:#D4D4D4;"></div>
<div class="r" style="left:788px;top:240px;width:1px;height:19px;background:#D4D4D4;"></div>
<div class="r" style="left:922px;top:240px;width:1px;height:19px;background:#D4D4D4;"></div>
<div class="r" style="left:1037px;top:240px;width:1px;height:19px;background:#D4D4D4;"></div>
<div class="r" style="left:26px;top:259px;width:1319px;height:1px;background:#B9CCAB;"></div>
<div class="r" style="left:26px;top:260px;width:1319px;height:19px;background:#E2EFDA;"></div>
<div class="r" style="left:26px;top:279px;width:1319px;height:1px;background:#B9CCAB;"></div>
<div class="r" style="left:75px;top:280px;width:1px;height:19px;background:#D4D4D4;"></div>
<div class="r" style="left:176px;top:280px;width:1px;height:19px;background:#D4D4D4;"></div>
<div class="r" style="left:253px;top:280px;width:1px;height:19px;background:#D4D4D4;"></div>
<div class="r" style="left:338px;top:280px;width:1px;height:19px;background:#D4D4D4;"></div>
<div class="r" style="left:424px;top:280px;width:1px;height:19px;background:#D4D4D4;"></div>
<div class="r" style="left:575px;top:280px;width:1px;height:19px;background:#D4D4D4;"></div>
<div class="r" style="left:788px;top:280px;width:1px;height:19px;background:#D4D4D4;"></div>
<div class="r" style="left:922px;top:280px;width:1px;height:19px;background:#D4D4D4;"></div>
<div class="r" style="left:1037px;top:280px;width:1px;height:19px;background:#D4D4D4;"></div>
<div class="r" style="left:26px;top:299px;width:1319px;height:1px;background:#B9CCAB;"></div>
<div class="r" style="left:26px;top:300px;width:1319px;height:19px;background:#E2EFDA;"></div>
<div class="r" style="left:26px;top:319px;width:1319px;height:1px;background:#B9CCAB;"></div>
<div class="r" style="left:75px;top:320px;width:1px;height:19px;background:#D4D4D4;"></div>
<div class="r" style="left:176px;top:320px;width:1px;height:19px;background:#D4D4D4;"></div>
<div class="r" style="left:253px;top:320px;width:1px;height:19px;background:#D4D4D4;"></div>
<div class="r" style="left:338px;top:320px;width:1px;height:19px;background:#D4D4D4;"></div>
<div class="r" style="left:424px;top:320px;width:1px;height:19px;background:#D4D4D4;"></div>
<div class="r" style="left:575px;top:320px;width:1px;height:19px;background:#D4D4D4;"></div>
<div class="r" style="left:788px;top:320px;width:1px;height:19px;background:#D4D4D4;"></div>
<div class="r" style="left:922px;top:320px;width:1px;height:19px;background:#D4D4D4;"></div>
<div class="r" style="left:1037px;top:320px;width:1px;height:19px;background:#D4D4D4;"></div>
<div class="r" style="left:26px;top:339px;width:1319px;height:1px;background:#B9CCAB;"></div>
<div class="r" style="left:26px;top:340px;width:1319px;height:19px;background:#E2EFDA;"></div>
<div class="r" style="left:26px;top:359px;width:1319px;height:1px;background:#B9CCAB;"></div>
<div class="r" style="left:75px;top:360px;width:1px;height:19px;background:#D4D4D4;"></div>
<div class="r" style="left:176px;top:360px;width:1px;height:19px;background:#D4D4D4;"></div>
<div class="r" style="left:253px;top:360px;width:1px;height:19px;background:#D4D4D4;"></div>
<div class="r" style="left:338px;top:360px;width:1px;height:19px;background:#D4D4D4;"></div>
<div class="r" style="left:424px;top:360px;width:1px;height:19px;background:#D4D4D4;"></div>
<div class="r" style="left:575px;top:360px;width:1px;height:19px;background:#D4D4D4;"></div>
<div class="r" style="left:788px;top:360px;width:1px;height:19px;background:#D4D4D4;"></div>
<div class="r" style="left:922px;top:360px;width:1px;height:19px;background:#D4D4D4;"></div>
<div class="r" style="left:1037px;top:360px;width:1px;height:19px;background:#D4D4D4;"></div>
<div class="r" style="left:26px;top:379px;width:1319px;height:1px;background:#B9CCAB;"></div>
<div class="r" style="left:26px;top:380px;width:1319px;height:19px;background:#E2EFDA;"></div>
<div class="r" style="left:26px;top:399px;width:1319px;height:1px;background:#B9CCAB;"></div>
<div class="r" style="left:75px;top:400px;width:1px;height:19px;background:#D4D4D4;"></div>
<div class="r" style="left:176px;top:400px;width:1px;height:19px;background:#D4D4D4;"></div>
<div class="r" style="left:253px;top:400px;width:1px;height:19px;background:#D4D4D4;"></div>
<div class="r" style="left:338px;top:400px;width:1px;height:19px;background:#D4D4D4;"></div>
<div class="r" style="left:424px;top:400px;width:1px;height:19px;background:#D4D4D4;"></div>
<div class="r" style="left:575px;top:400px;width:1px;height:19px;background:#D4D4D4;"></div>
<div class="r" style="left:788px;top:400px;width:1px;height:19px;background:#D4D4D4;"></div>
<div class="r" style="left:922px;top:400px;width:1px;height:19px;background:#D4D4D4;"></div>
<div class="r" style="left:1037px;top:400px;width:1px;height:19px;background:#D4D4D4;"></div>
<div class="r" style="left:26px;top:419px;width:1319px;height:1px;background:#B9CCAB;"></div>
<div class="r" style="left:26px;top:420px;width:1319px;height:19px;background:#E2EFDA;"></div>
<div class="r" style="left:26px;top:439px;width:1319px;height:1px;background:#B9CCAB;"></div>
<div class="r" style="left:75px;top:440px;width:1px;height:19px;background:#D4D4D4;"></div>
<div class="r" style="left:176px;top:440px;width:1px;height:19px;background:#D4D4D4;"></div>
<div class="r" style="left:253px;top:440px;width:1px;height:19px;background:#D4D4D4;"></div>
<div class="r" style="left:338px;top:440px;width:1px;height:19px;background:#D4D4D4;"></div>
<div class="r" style="left:424px;top:440px;width:1px;height:19px;background:#D4D4D4;"></div>
<div class="r" style="left:575px;top:440px;width:1px;height:19px;background:#D4D4D4;"></div>
<div class="r" style="left:788px;top:440px;width:1px;height:19px;background:#D4D4D4;"></div>
<div class="r" style="left:922px;top:440px;width:1px;height:19px;background:#D4D4D4;"></div>
<div class="r" style="left:1037px;top:440px;width:1px;height:19px;background:#D4D4D4;"></div>
<div class="r" style="left:26px;top:459px;width:1319px;height:1px;background:#B9CCAB;"></div>
</div>
<div class="r" style="left:0;top:0;width:1345px;height:678px;overflow:hidden">
<div class="t" style="left:9.32px;top:232.22px;font-size:12.5px;color:#333333;">1</div>
<div class="t" style="left:9.32px;top:252.22px;font-size:12.5px;color:#333333;">2</div>
<div class="t" style="left:9.32px;top:272.22px;font-size:12.5px;color:#333333;">3</div>
<div class="t" style="left:9.32px;top:292.22px;font-size:12.5px;color:#333333;">4</div>
<div class="t" style="left:9.32px;top:312.22px;font-size:12.5px;color:#333333;">5</div>
<div class="t" style="left:9.32px;top:332.22px;font-size:12.5px;color:#333333;">6</div>
<div class="t" style="left:9.32px;top:352.22px;font-size:12.5px;color:#333333;">7</div>
<div class="t" style="left:9.32px;top:372.22px;font-size:12.5px;color:#333333;">8</div>
<div class="t" style="left:9.32px;top:392.22px;font-size:12.5px;color:#333333;">9</div>
<div class="t" style="left:5.85px;top:412.22px;font-size:12.5px;color:#333333;">10</div>
<div class="t" style="left:6.31px;top:432.22px;font-size:12.5px;color:#333333;">11</div>
<div class="t" style="left:5.85px;top:452.22px;font-size:12.5px;color:#333333;">12</div>
<div class="t" style="left:5.85px;top:472.22px;font-size:12.5px;color:#333333;">13</div>
<div class="t" style="left:5.85px;top:492.22px;font-size:12.5px;color:#333333;">14</div>
<div class="t" style="left:5.85px;top:512.22px;font-size:12.5px;color:#333333;">15</div>
<div class="t" style="left:5.85px;top:532.22px;font-size:12.5px;color:#333333;">16</div>
<div class="t" style="left:5.85px;top:552.22px;font-size:12.5px;color:#333333;">17</div>
<div class="t" style="left:5.85px;top:572.22px;font-size:12.5px;color:#333333;">18</div>
<div class="t" style="left:5.85px;top:592.22px;font-size:12.5px;color:#333333;">19</div>
<div class="t" style="left:5.85px;top:612.22px;font-size:12.5px;color:#333333;">20</div>
<div class="t" style="left:5.85px;top:632.22px;font-size:12.5px;color:#333333;">21</div>
<div class="t" style="left:5.85px;top:652.22px;font-size:12.5px;color:#333333;">22</div>
<div class="t" style="left:5.85px;top:672.22px;font-size:12.5px;color:#333333;">23</div>
<div class="t" style="left:27.60px;top:230.57px;font-size:13.5px;color:#F4FBE2;font-weight:bold;transform:scaleX(0.9880);">Nro.</div>
<div class="r" style="left:59px;top:229px;width:15px;height:15px;background:#FFFFFF;box-sizing:border-box;border:1px solid #D0D0D0;"></div>
<svg class="s" style="left:63px;top:235px;" width="7" height="4" viewBox="0 0 7 4"><path d="M0 0h7l-3.5 4z" fill="#595959"/></svg>
<div class="t" style="left:77.60px;top:230.57px;font-size:13.5px;color:#F4FBE2;font-weight:bold;transform:scaleX(0.9376);">Partida Pres.</div>
<div class="r" style="left:160px;top:229px;width:15px;height:15px;background:#FFFFFF;box-sizing:border-box;border:1px solid #D0D0D0;"></div>
<svg class="s" style="left:164px;top:235px;" width="7" height="4" viewBox="0 0 7 4"><path d="M0 0h7l-3.5 4z" fill="#595959"/></svg>
<div class="t" style="left:178.60px;top:230.57px;font-size:13.5px;color:#F4FBE2;font-weight:bold;transform:scaleX(0.8351);">CPC</div>
<div class="r" style="left:237px;top:229px;width:15px;height:15px;background:#FFFFFF;box-sizing:border-box;border:1px solid #D0D0D0;"></div>
<svg class="s" style="left:241px;top:235px;" width="7" height="4" viewBox="0 0 7 4"><path d="M0 0h7l-3.5 4z" fill="#595959"/></svg>
<div class="t" style="left:255.60px;top:230.57px;font-size:13.5px;color:#F4FBE2;font-weight:bold;transform:scaleX(0.9625);">T. Compra</div>
<div class="r" style="left:322px;top:229px;width:15px;height:15px;background:#FFFFFF;box-sizing:border-box;border:1px solid #D0D0D0;"></div>
<svg class="s" style="left:326px;top:235px;" width="7" height="4" viewBox="0 0 7 4"><path d="M0 0h7l-3.5 4z" fill="#595959"/></svg>
<div class="t" style="left:340.60px;top:230.57px;font-size:13.5px;color:#F4FBE2;font-weight:bold;transform:scaleX(0.9256);">Fondo BID</div>
<div class="r" style="left:408px;top:229px;width:15px;height:15px;background:#FFFFFF;box-sizing:border-box;border:1px solid #D0D0D0;"></div>
<svg class="s" style="left:412px;top:235px;" width="7" height="4" viewBox="0 0 7 4"><path d="M0 0h7l-3.5 4z" fill="#595959"/></svg>
<div class="t" style="left:426.60px;top:230.57px;font-size:13.5px;color:#F4FBE2;font-weight:bold;transform:scaleX(0.9393);">Tipo de Presupuesto</div>
<div class="r" style="left:559px;top:229px;width:15px;height:15px;background:#FFFFFF;box-sizing:border-box;border:1px solid #D0D0D0;"></div>
<svg class="s" style="left:563px;top:235px;" width="7" height="4" viewBox="0 0 7 4"><path d="M0 0h7l-3.5 4z" fill="#595959"/></svg>
<div class="t" style="left:577.60px;top:230.57px;font-size:13.5px;color:#F4FBE2;font-weight:bold;transform:scaleX(0.9524);">Tipo de Producto Normalizado</div>
<div class="r" style="left:772px;top:229px;width:15px;height:15px;background:#FFFFFF;box-sizing:border-box;border:1px solid #D0D0D0;"></div>
<svg class="s" style="left:776px;top:235px;" width="7" height="4" viewBox="0 0 7 4"><path d="M0 0h7l-3.5 4z" fill="#595959"/></svg>
<div class="t" style="left:790.60px;top:230.57px;font-size:13.5px;color:#F4FBE2;font-weight:bold;transform:scaleX(0.9334);">Cat. Electrónico</div>
<div class="r" style="left:906px;top:229px;width:15px;height:15px;background:#FFFFFF;box-sizing:border-box;border:1px solid #D0D0D0;"></div>
<svg class="s" style="left:910px;top:235px;" width="7" height="4" viewBox="0 0 7 4"><path d="M0 0h7l-3.5 4z" fill="#595959"/></svg>
<div class="t" style="left:924.60px;top:230.57px;font-size:13.5px;color:#F4FBE2;font-weight:bold;transform:scaleX(0.9594);">Procedimiento</div>
<div class="r" style="left:1021px;top:229px;width:15px;height:15px;background:#FFFFFF;box-sizing:border-box;border:1px solid #D0D0D0;"></div>
<svg class="s" style="left:1025px;top:235px;" width="7" height="4" viewBox="0 0 7 4"><path d="M0 0h7l-3.5 4z" fill="#595959"/></svg>
<div class="t" style="left:1039.60px;top:230.57px;font-size:13.5px;color:#F4FBE2;font-weight:bold;transform:scaleX(0.9215);">Descripción</div>
<div class="t" style="left:66.35px;top:250.57px;font-size:13.5px;color:#000000;transform:scaleX(0.9390);">1</div>
<div class="t" style="left:132.10px;top:250.57px;font-size:13.5px;color:#000000;transform:scaleX(0.9390);">840107</div>
<div class="t" style="left:180.90px;top:250.57px;font-size:13.5px;color:#000000;transform:scaleX(0.9647);">4516003111</div>
<div class="t" style="left:255.60px;top:250.57px;font-size:13.5px;color:#000000;transform:scaleX(1.0098);">Bien</div>
<div class="t" style="left:340.60px;top:250.57px;font-size:13.5px;color:#000000;transform:scaleX(0.9807);">NO</div>
<div class="t" style="left:426.60px;top:250.57px;font-size:13.5px;color:#000000;transform:scaleX(1.0250);">Gasto Corriente</div>
<div class="t" style="left:577.60px;top:250.57px;font-size:13.5px;color:#000000;transform:scaleX(0.8463);">SI</div>
<div class="t" style="left:790.60px;top:250.57px;font-size:13.5px;color:#000000;transform:scaleX(1.0192);">Catalogo Electrónico</div>
<div class="t" style="left:924.60px;top:250.57px;font-size:13.5px;color:#000000;transform:scaleX(1.0149);">Común</div>
<div class="t" style="left:1039.60px;top:250.57px;font-size:13.5px;color:#000000;transform:scaleX(0.9596);">Egresos</div>
<div class="t" style="left:1090.57px;top:250.57px;font-size:13.5px;color:#000000;transform:scaleX(1.0344);">para</div>
<div class="t" style="left:1121.97px;top:250.57px;font-size:13.5px;color:#000000;transform:scaleX(1.0294);">la</div>
<div class="t" style="left:1136.24px;top:250.57px;font-size:13.5px;color:#000000;transform:scaleX(1.0513);">compra</div>
<div class="t" style="left:1187.01px;top:250.57px;font-size:13.5px;color:#000000;transform:scaleX(1.0394);">de</div>
<div class="t" style="left:1206.07px;top:250.57px;font-size:13.5px;color:#000000;transform:scaleX(1.0375);">equipos,</div>
<div class="t" style="left:1262.47px;top:250.57px;font-size:13.5px;color:#000000;transform:scaleX(1.0066);">sistemas</div>
<div class="t" style="left:1319.53px;top:250.57px;font-size:13.5px;color:#000000;transform:scaleX(1.0239);">y</div>
<div class="t" style="left:1329.89px;top:250.57px;font-size:13.5px;color:#000000;transform:scaleX(1.0371);">paquetes</div>
<div class="t" style="left:66.35px;top:270.57px;font-size:13.5px;color:#000000;transform:scaleX(0.9390);">2</div>
<div class="t" style="left:132.10px;top:270.57px;font-size:13.5px;color:#000000;transform:scaleX(0.9390);">840107</div>
<div class="t" style="left:180.90px;top:270.57px;font-size:13.5px;color:#000000;transform:scaleX(0.9390);">4523000827</div>
<div class="t" style="left:255.60px;top:270.57px;font-size:13.5px;color:#000000;transform:scaleX(1.0098);">Bien</div>
<div class="t" style="left:340.60px;top:270.57px;font-size:13.5px;color:#000000;transform:scaleX(0.9807);">NO</div>
<div class="t" style="left:426.60px;top:270.57px;font-size:13.5px;color:#000000;transform:scaleX(1.0295);">Proyecto de Inversión</div>
<div class="t" style="left:577.60px;top:270.57px;font-size:13.5px;color:#000000;transform:scaleX(0.8463);">SI</div>
<div class="t" style="left:790.60px;top:270.57px;font-size:13.5px;color:#000000;transform:scaleX(1.0192);">Catalogo Electrónico</div>
<div class="t" style="left:924.60px;top:270.57px;font-size:13.5px;color:#000000;transform:scaleX(1.0149);">Común</div>
<div class="t" style="left:1039.60px;top:270.57px;font-size:13.5px;color:#000000;transform:scaleX(1.0408);">Adquisicion</div>
<div class="t" style="left:1114.91px;top:270.57px;font-size:13.5px;color:#000000;transform:scaleX(1.0394);">de</div>
<div class="t" style="left:1133.96px;top:270.57px;font-size:13.5px;color:#000000;transform:scaleX(1.0051);">Equipos,</div>
<div class="t" style="left:1190.22px;top:270.57px;font-size:13.5px;color:#000000;transform:scaleX(0.9844);">Sistemas</div>
<div class="t" style="left:1248.31px;top:270.57px;font-size:13.5px;color:#000000;transform:scaleX(1.0239);">y</div>
<div class="t" style="left:1258.67px;top:270.57px;font-size:13.5px;color:#000000;transform:scaleX(1.0077);">Paquetes</div>
<div class="t" style="left:1319.61px;top:270.57px;font-size:13.5px;color:#000000;transform:scaleX(1.0670);">Informáticos</div>
<div class="t" style="left:66.35px;top:290.57px;font-size:13.5px;color:#000000;transform:scaleX(0.9390);">3</div>
<div class="t" style="left:132.10px;top:290.57px;font-size:13.5px;color:#000000;transform:scaleX(0.9390);">840106</div>
<div class="t" style="left:187.95px;top:290.57px;font-size:13.5px;color:#000000;transform:scaleX(0.9531);">441400011</div>
<div class="t" style="left:255.60px;top:290.57px;font-size:13.5px;color:#000000;transform:scaleX(1.0098);">Bien</div>
<div class="t" style="left:340.60px;top:290.57px;font-size:13.5px;color:#000000;transform:scaleX(0.9807);">NO</div>
<div class="t" style="left:426.60px;top:290.57px;font-size:13.5px;color:#000000;transform:scaleX(1.0295);">Proyecto de Inversión</div>
<div class="t" style="left:577.60px;top:290.57px;font-size:13.5px;color:#000000;transform:scaleX(0.9807);">NO</div>
<div class="t" style="left:790.60px;top:290.57px;font-size:13.5px;color:#000000;transform:scaleX(1.0241);">Infima Cuantía</div>
<div class="t" style="left:924.60px;top:290.57px;font-size:13.5px;color:#000000;transform:scaleX(1.0149);">Común</div>
<div class="t" style="left:1039.60px;top:290.57px;font-size:13.5px;color:#000000;transform:scaleX(0.9596);">Egresos</div>
<div class="t" style="left:1090.57px;top:290.57px;font-size:13.5px;color:#000000;transform:scaleX(1.0344);">para</div>
<div class="t" style="left:1121.97px;top:290.57px;font-size:13.5px;color:#000000;transform:scaleX(1.0294);">la</div>
<div class="t" style="left:1136.24px;top:290.57px;font-size:13.5px;color:#000000;transform:scaleX(1.0412);">adquisición</div>
<div class="t" style="left:1210.02px;top:290.57px;font-size:13.5px;color:#000000;transform:scaleX(1.0394);">de</div>
<div class="t" style="left:1229.07px;top:290.57px;font-size:13.5px;color:#000000;transform:scaleX(1.0567);">herramientas</div>
<div class="t" style="left:1315.78px;top:290.57px;font-size:13.5px;color:#000000;transform:scaleX(1.0149);">consideradas</div>
<div class="t" style="left:66.35px;top:310.57px;font-size:13.5px;color:#000000;transform:scaleX(0.9390);">4</div>
<div class="t" style="left:132.10px;top:310.57px;font-size:13.5px;color:#000000;transform:scaleX(0.9390);">840104</div>
<div class="t" style="left:187.95px;top:310.57px;font-size:13.5px;color:#000000;transform:scaleX(0.9390);">473130022</div>
<div class="t" style="left:255.60px;top:310.57px;font-size:13.5px;color:#000000;transform:scaleX(1.0098);">Bien</div>
<div class="t" style="left:340.60px;top:310.57px;font-size:13.5px;color:#000000;transform:scaleX(0.9807);">NO</div>
<div class="t" style="left:426.60px;top:310.57px;font-size:13.5px;color:#000000;transform:scaleX(1.0295);">Proyecto de Inversión</div>
<div class="t" style="left:577.60px;top:310.57px;font-size:13.5px;color:#000000;transform:scaleX(0.9807);">NO</div>
<div class="t" style="left:790.60px;top:310.57px;font-size:13.5px;color:#000000;transform:scaleX(1.0241);">Infima Cuantía</div>
<div class="t" style="left:924.60px;top:310.57px;font-size:13.5px;color:#000000;transform:scaleX(1.0149);">Común</div>
<div class="t" style="left:1039.60px;top:310.57px;font-size:13.5px;color:#000000;transform:scaleX(0.9596);">Egresos</div>
<div class="t" style="left:1090.57px;top:310.57px;font-size:13.5px;color:#000000;transform:scaleX(1.0344);">para</div>
<div class="t" style="left:1121.97px;top:310.57px;font-size:13.5px;color:#000000;transform:scaleX(1.0294);">la</div>
<div class="t" style="left:1136.24px;top:310.57px;font-size:13.5px;color:#000000;transform:scaleX(1.0412);">adquisición</div>
<div class="t" style="left:1210.02px;top:310.57px;font-size:13.5px;color:#000000;transform:scaleX(1.0394);">de</div>
<div class="t" style="left:1229.07px;top:310.57px;font-size:13.5px;color:#000000;transform:scaleX(1.0553);">maquinaria</div>
<div class="t" style="left:1303.01px;top:310.57px;font-size:13.5px;color:#000000;transform:scaleX(1.0239);">y</div>
<div class="t" style="left:1313.37px;top:310.57px;font-size:13.5px;color:#000000;transform:scaleX(1.0391);">equipos</div>
<div class="t" style="left:66.35px;top:330.57px;font-size:13.5px;color:#000000;transform:scaleX(0.9390);">5</div>
<div class="t" style="left:132.10px;top:330.57px;font-size:13.5px;color:#000000;transform:scaleX(0.9390);">840104</div>
<div class="t" style="left:187.95px;top:330.57px;font-size:13.5px;color:#000000;transform:scaleX(0.9531);">439110412</div>
<div class="t" style="left:255.60px;top:330.57px;font-size:13.5px;color:#000000;transform:scaleX(1.0098);">Bien</div>
<div class="t" style="left:340.60px;top:330.57px;font-size:13.5px;color:#000000;transform:scaleX(0.9807);">NO</div>
<div class="t" style="left:426.60px;top:330.57px;font-size:13.5px;color:#000000;transform:scaleX(1.0295);">Proyecto de Inversión</div>
<div class="t" style="left:577.60px;top:330.57px;font-size:13.5px;color:#000000;transform:scaleX(0.9807);">NO</div>
<div class="t" style="left:790.60px;top:330.57px;font-size:13.5px;color:#000000;transform:scaleX(1.0241);">Infima Cuantía</div>
<div class="t" style="left:924.60px;top:330.57px;font-size:13.5px;color:#000000;transform:scaleX(1.0149);">Común</div>
<div class="t" style="left:1039.60px;top:330.57px;font-size:13.5px;color:#000000;transform:scaleX(1.0408);">Adquisicion</div>
<div class="t" style="left:1114.91px;top:330.57px;font-size:13.5px;color:#000000;transform:scaleX(1.0394);">de</div>
<div class="t" style="left:1133.96px;top:330.57px;font-size:13.5px;color:#000000;transform:scaleX(0.9780);">MAQUINARIAS</div>
<div class="t" style="left:1229.85px;top:330.57px;font-size:13.5px;color:#000000;transform:scaleX(0.8251);">Y</div>
<div class="t" style="left:1240.73px;top:330.57px;font-size:13.5px;color:#000000;transform:scaleX(0.9159);">EQUIPOS</div>
<div class="t" style="left:1300.52px;top:330.57px;font-size:13.5px;color:#000000;transform:scaleX(1.0171);">dispensadores</div>
<div class="t" style="left:66.35px;top:350.57px;font-size:13.5px;color:#000000;transform:scaleX(0.9390);">6</div>
<div class="t" style="left:132.10px;top:350.57px;font-size:13.5px;color:#000000;transform:scaleX(0.9390);">840103</div>
<div class="t" style="left:180.90px;top:350.57px;font-size:13.5px;color:#000000;transform:scaleX(0.9517);">3812100115</div>
<div class="t" style="left:255.60px;top:350.57px;font-size:13.5px;color:#000000;transform:scaleX(1.0098);">Bien</div>
<div class="t" style="left:340.60px;top:350.57px;font-size:13.5px;color:#000000;transform:scaleX(0.9807);">NO</div>
<div class="t" style="left:426.60px;top:350.57px;font-size:13.5px;color:#000000;transform:scaleX(1.0250);">Gasto Corriente</div>
<div class="t" style="left:577.60px;top:350.57px;font-size:13.5px;color:#000000;transform:scaleX(0.8463);">SI</div>
<div class="t" style="left:790.60px;top:350.57px;font-size:13.5px;color:#000000;transform:scaleX(1.0192);">Catalogo Electrónico</div>
<div class="t" style="left:924.60px;top:350.57px;font-size:13.5px;color:#000000;transform:scaleX(1.0149);">Común</div>
<div class="t" style="left:1039.60px;top:350.57px;font-size:13.5px;color:#000000;transform:scaleX(0.9596);">Egresos</div>
<div class="t" style="left:1090.57px;top:350.57px;font-size:13.5px;color:#000000;transform:scaleX(1.0344);">para</div>
<div class="t" style="left:1121.97px;top:350.57px;font-size:13.5px;color:#000000;transform:scaleX(1.0294);">la</div>
<div class="t" style="left:1136.24px;top:350.57px;font-size:13.5px;color:#000000;transform:scaleX(1.0412);">adquisición</div>
<div class="t" style="left:1210.02px;top:350.57px;font-size:13.5px;color:#000000;transform:scaleX(1.0394);">de</div>
<div class="t" style="left:1229.07px;top:350.57px;font-size:13.5px;color:#000000;transform:scaleX(1.0896);">mobiliario</div>
<div class="t" style="left:1295.47px;top:350.57px;font-size:13.5px;color:#000000;transform:scaleX(0.8823);">DEPRECIABLE</div>
<div class="t" style="left:66.35px;top:370.57px;font-size:13.5px;color:#000000;transform:scaleX(0.9390);">7</div>
<div class="t" style="left:132.10px;top:370.57px;font-size:13.5px;color:#000000;transform:scaleX(0.9390);">840103</div>
<div class="t" style="left:187.95px;top:370.57px;font-size:13.5px;color:#000000;transform:scaleX(0.9531);">381120015</div>
<div class="t" style="left:255.60px;top:370.57px;font-size:13.5px;color:#000000;transform:scaleX(1.0098);">Bien</div>
<div class="t" style="left:340.60px;top:370.57px;font-size:13.5px;color:#000000;transform:scaleX(0.9807);">NO</div>
<div class="t" style="left:426.60px;top:370.57px;font-size:13.5px;color:#000000;transform:scaleX(1.0295);">Proyecto de Inversión</div>
<div class="t" style="left:577.60px;top:370.57px;font-size:13.5px;color:#000000;transform:scaleX(0.9807);">NO</div>
<div class="t" style="left:790.60px;top:370.57px;font-size:13.5px;color:#000000;transform:scaleX(1.0241);">Infima Cuantía</div>
<div class="t" style="left:924.60px;top:370.57px;font-size:13.5px;color:#000000;transform:scaleX(1.0149);">Común</div>
<div class="t" style="left:1039.60px;top:370.57px;font-size:13.5px;color:#000000;transform:scaleX(1.0408);">Adquisición</div>
<div class="t" style="left:1114.91px;top:370.57px;font-size:13.5px;color:#000000;transform:scaleX(1.0394);">de</div>
<div class="t" style="left:1133.96px;top:370.57px;font-size:13.5px;color:#000000;transform:scaleX(1.0508);">Equipamiento</div>
<div class="t" style="left:1224.16px;top:370.57px;font-size:13.5px;color:#000000;transform:scaleX(1.0344);">para</div>
<div class="t" style="left:1255.56px;top:370.57px;font-size:13.5px;color:#000000;transform:scaleX(1.0570);">el</div>
<div class="t" style="left:1270.11px;top:370.57px;font-size:13.5px;color:#000000;transform:scaleX(0.9335);">CDI.</div>
<div class="t" style="left:66.35px;top:390.57px;font-size:13.5px;color:#000000;transform:scaleX(0.9390);">8</div>
<div class="t" style="left:132.10px;top:390.57px;font-size:13.5px;color:#000000;transform:scaleX(0.9390);">840103</div>
<div class="t" style="left:187.95px;top:390.57px;font-size:13.5px;color:#000000;transform:scaleX(0.9390);">421900025</div>
<div class="t" style="left:255.60px;top:390.57px;font-size:13.5px;color:#000000;transform:scaleX(1.0098);">Bien</div>
<div class="t" style="left:340.60px;top:390.57px;font-size:13.5px;color:#000000;transform:scaleX(0.9807);">NO</div>
<div class="t" style="left:426.60px;top:390.57px;font-size:13.5px;color:#000000;transform:scaleX(1.0295);">Proyecto de Inversión</div>
<div class="t" style="left:577.60px;top:390.57px;font-size:13.5px;color:#000000;transform:scaleX(0.8463);">SI</div>
<div class="t" style="left:790.60px;top:390.57px;font-size:13.5px;color:#000000;transform:scaleX(1.0192);">Catalogo Electrónico</div>
<div class="t" style="left:924.60px;top:390.57px;font-size:13.5px;color:#000000;transform:scaleX(1.0149);">Común</div>
<div class="t" style="left:1039.60px;top:390.57px;font-size:13.5px;color:#000000;transform:scaleX(1.0408);">Adquisición</div>
<div class="t" style="left:1114.91px;top:390.57px;font-size:13.5px;color:#000000;transform:scaleX(1.0394);">de</div>
<div class="t" style="left:1133.96px;top:390.57px;font-size:13.5px;color:#000000;transform:scaleX(1.0467);">estantería</div>
<div class="t" style="left:1200.25px;top:390.57px;font-size:13.5px;color:#000000;transform:scaleX(1.0394);">de</div>
<div class="t" style="left:1219.31px;top:390.57px;font-size:13.5px;color:#000000;transform:scaleX(1.0819);">metal</div>
<div class="t" style="left:1258.47px;top:390.57px;font-size:13.5px;color:#000000;transform:scaleX(1.0344);">para</div>
<div class="t" style="left:1289.87px;top:390.57px;font-size:13.5px;color:#000000;transform:scaleX(1.0570);">el</div>
<div class="t" style="left:1304.43px;top:390.57px;font-size:13.5px;color:#000000;transform:scaleX(1.0716);">proyecto</div>
<div class="t" style="left:66.35px;top:410.57px;font-size:13.5px;color:#000000;transform:scaleX(0.9390);">9</div>
<div class="t" style="left:132.10px;top:410.57px;font-size:13.5px;color:#000000;transform:scaleX(0.9390);">840103</div>
<div class="t" style="left:180.90px;top:410.57px;font-size:13.5px;color:#000000;transform:scaleX(0.9390);">3812200171</div>
<div class="t" style="left:255.60px;top:410.57px;font-size:13.5px;color:#000000;transform:scaleX(1.0098);">Bien</div>
<div class="t" style="left:340.60px;top:410.57px;font-size:13.5px;color:#000000;transform:scaleX(0.9807);">NO</div>
<div class="t" style="left:426.60px;top:410.57px;font-size:13.5px;color:#000000;transform:scaleX(1.0295);">Proyecto de Inversión</div>
<div class="t" style="left:577.60px;top:410.57px;font-size:13.5px;color:#000000;transform:scaleX(0.8463);">SI</div>
<div class="t" style="left:790.60px;top:410.57px;font-size:13.5px;color:#000000;transform:scaleX(1.0192);">Catalogo Electrónico</div>
<div class="t" style="left:924.60px;top:410.57px;font-size:13.5px;color:#000000;transform:scaleX(1.0149);">Común</div>
<div class="t" style="left:1039.60px;top:410.57px;font-size:13.5px;color:#000000;transform:scaleX(1.0408);">Adquisicion</div>
<div class="t" style="left:1114.91px;top:410.57px;font-size:13.5px;color:#000000;transform:scaleX(1.0394);">de</div>
<div class="t" style="left:1133.96px;top:410.57px;font-size:13.5px;color:#000000;transform:scaleX(1.0813);">Mobiliarios</div>
<div class="t" style="left:1207.18px;top:410.57px;font-size:13.5px;color:#000000;transform:scaleX(0.9275);">VITRINAS</div>
<div class="t" style="left:1268.38px;top:410.57px;font-size:13.5px;color:#000000;transform:scaleX(0.8973);">DE</div>
<div class="t" style="left:1288.65px;top:410.57px;font-size:13.5px;color:#000000;transform:scaleX(0.9836);">METAL,</div>
<div class="t" style="left:1339.08px;top:410.57px;font-size:13.5px;color:#000000;transform:scaleX(0.9363);">CON</div>
<div class="t" style="left:59.30px;top:430.57px;font-size:13.5px;color:#000000;transform:scaleX(0.9390);">10</div>
<div class="t" style="left:132.10px;top:430.57px;font-size:13.5px;color:#000000;transform:scaleX(0.9390);">840103</div>
<div class="t" style="left:187.95px;top:430.57px;font-size:13.5px;color:#000000;transform:scaleX(0.9390);">271900214</div>
<div class="t" style="left:255.60px;top:430.57px;font-size:13.5px;color:#000000;transform:scaleX(1.0110);">Bien.</div>
<div class="t" style="left:340.60px;top:430.57px;font-size:13.5px;color:#000000;transform:scaleX(0.9807);">NO</div>
<div class="t" style="left:426.60px;top:430.57px;font-size:13.5px;color:#000000;transform:scaleX(1.0295);">Proyecto de Inversión</div>
<div class="t" style="left:577.60px;top:430.57px;font-size:13.5px;color:#000000;transform:scaleX(0.8463);">SI</div>
<div class="t" style="left:790.60px;top:430.57px;font-size:13.5px;color:#000000;transform:scaleX(1.0192);">Catalogo Electrónico</div>
<div class="t" style="left:924.60px;top:430.57px;font-size:13.5px;color:#000000;transform:scaleX(1.0149);">Común</div>
<div class="t" style="left:1039.60px;top:430.57px;font-size:13.5px;color:#000000;transform:scaleX(1.0408);">Adquisición</div>
<div class="t" style="left:1114.91px;top:430.57px;font-size:13.5px;color:#000000;transform:scaleX(1.0394);">de</div>
<div class="t" style="left:1133.96px;top:430.57px;font-size:13.5px;color:#000000;transform:scaleX(1.0224);">símbolos</div>
<div class="t" style="left:1192.64px;top:430.57px;font-size:13.5px;color:#000000;">cívicos:</div>
<div class="t" style="left:1241.01px;top:430.57px;font-size:13.5px;color:#000000;transform:scaleX(1.0408);">bandera</div>
<div class="t" style="left:1296.02px;top:430.57px;font-size:13.5px;color:#000000;transform:scaleX(1.0611);">del</div>
<div class="t" style="left:1318.59px;top:430.57px;font-size:13.5px;color:#000000;transform:scaleX(1.0401);">ecuador</div>
<div class="t" style="left:59.30px;top:450.57px;font-size:13.5px;color:#000000;transform:scaleX(1.0061);">11</div>
<div class="t" style="left:132.10px;top:450.57px;font-size:13.5px;color:#000000;transform:scaleX(0.9390);">750501</div>
<div class="t" style="left:187.95px;top:450.57px;font-size:13.5px;color:#000000;transform:scaleX(0.9390);">541210014</div>
<div class="t" style="left:255.60px;top:450.57px;font-size:13.5px;color:#000000;transform:scaleX(1.0194);">Obra</div>
<div class="t" style="left:340.60px;top:450.57px;font-size:13.5px;color:#000000;transform:scaleX(0.9807);">NO</div>
<div class="t" style="left:426.60px;top:450.57px;font-size:13.5px;color:#000000;transform:scaleX(1.0295);">Proyecto de Inversión</div>
<div class="t" style="left:577.60px;top:450.57px;font-size:13.5px;color:#000000;transform:scaleX(0.9807);">NO</div>
<div class="t" style="left:790.60px;top:450.57px;font-size:13.5px;color:#000000;transform:scaleX(1.0606);">Menor cuantia</div>
<div class="t" style="left:924.60px;top:450.57px;font-size:13.5px;color:#000000;transform:scaleX(1.0149);">Común</div>
<div class="t" style="left:1039.60px;top:450.57px;font-size:13.5px;color:#000000;transform:scaleX(0.9914);">MANTENIMIENTO</div>
<div class="t" style="left:1155.08px;top:450.57px;font-size:13.5px;color:#000000;transform:scaleX(0.8973);">DE</div>
<div class="t" style="left:1175.36px;top:450.57px;font-size:13.5px;color:#000000;transform:scaleX(0.8857);">ESPACIOS</div>
<div class="t" style="left:1239.05px;top:450.57px;font-size:13.5px;color:#000000;transform:scaleX(0.9003);">PUBLICOS</div>
<div class="t" style="left:1303.97px;top:450.57px;font-size:13.5px;color:#000000;transform:scaleX(0.9077);">DEPORTIVOS</div>
<div class="t" style="left:59.30px;top:470.57px;font-size:13.5px;color:#000000;transform:scaleX(0.9390);">12</div>
<div class="t" style="left:132.10px;top:470.57px;font-size:13.5px;color:#000000;transform:scaleX(0.9390);">750501</div>
<div class="t" style="left:187.95px;top:470.57px;font-size:13.5px;color:#000000;transform:scaleX(0.9531);">873100011</div>
<div class="t" style="left:255.60px;top:470.57px;font-size:13.5px;color:#000000;transform:scaleX(1.0194);">Obra</div>
<div class="t" style="left:340.60px;top:470.57px;font-size:13.5px;color:#000000;transform:scaleX(0.9807);">NO</div>
<div class="t" style="left:426.60px;top:470.57px;font-size:13.5px;color:#000000;transform:scaleX(1.0295);">Proyecto de Inversión</div>
<div class="t" style="left:577.60px;top:470.57px;font-size:13.5px;color:#000000;transform:scaleX(0.9807);">NO</div>
<div class="t" style="left:790.60px;top:470.57px;font-size:13.5px;color:#000000;transform:scaleX(1.0606);">Menor cuantia</div>
<div class="t" style="left:924.60px;top:470.57px;font-size:13.5px;color:#000000;transform:scaleX(1.0149);">Común</div>
<div class="t" style="left:1039.60px;top:470.57px;font-size:13.5px;color:#000000;transform:scaleX(1.0405);">Orden</div>
<div class="t" style="left:1082.09px;top:470.57px;font-size:13.5px;color:#000000;transform:scaleX(1.0394);">de</div>
<div class="t" style="left:1101.15px;top:470.57px;font-size:13.5px;color:#000000;transform:scaleX(1.0840);">trabajo</div>
<div class="t" style="left:1149.34px;top:470.57px;font-size:13.5px;color:#000000;transform:scaleX(1.0611);">del</div>
<div class="t" style="left:1171.91px;top:470.57px;font-size:13.5px;color:#000000;transform:scaleX(1.0947);">contrato</div>
<div class="t" style="left:1228.75px;top:470.57px;font-size:13.5px;color:#000000;transform:scaleX(0.9444);">MCO-GADPRSJP-2022</div>
<div class="t" style="left:59.30px;top:490.57px;font-size:13.5px;color:#000000;transform:scaleX(0.9390);">13</div>
<div class="t" style="left:132.10px;top:490.57px;font-size:13.5px;color:#000000;transform:scaleX(0.9390);">750107</div>
<div class="t" style="left:187.95px;top:490.57px;font-size:13.5px;color:#000000;transform:scaleX(0.9531);">532900011</div>
<div class="t" style="left:255.60px;top:490.57px;font-size:13.5px;color:#000000;transform:scaleX(1.0194);">Obra</div>
<div class="t" style="left:340.60px;top:490.57px;font-size:13.5px;color:#000000;transform:scaleX(0.9807);">NO</div>
<div class="t" style="left:426.60px;top:490.57px;font-size:13.5px;color:#000000;transform:scaleX(1.0295);">Proyecto de Inversión</div>
<div class="t" style="left:577.60px;top:490.57px;font-size:13.5px;color:#000000;transform:scaleX(0.9807);">NO</div>
<div class="t" style="left:790.60px;top:490.57px;font-size:13.5px;color:#000000;transform:scaleX(1.0311);">Licitación</div>
<div class="t" style="left:924.60px;top:490.57px;font-size:13.5px;color:#000000;transform:scaleX(1.0149);">Común</div>
<div class="t" style="left:1039.60px;top:490.57px;font-size:13.5px;color:#000000;transform:scaleX(0.9131);">CONSTRUCCIÓN</div>
<div class="t" style="left:1143.71px;top:490.57px;font-size:13.5px;color:#000000;transform:scaleX(0.8973);">DE</div>
<div class="t" style="left:1163.99px;top:490.57px;font-size:13.5px;color:#000000;transform:scaleX(0.9348);">CANCHA</div>
<div class="t" style="left:1220.73px;top:490.57px;font-size:13.5px;color:#000000;transform:scaleX(0.9360);">DEPORTIVA</div>
<div class="t" style="left:1296.04px;top:490.57px;font-size:13.5px;color:#000000;transform:scaleX(0.8973);">DE</div>
<div class="t" style="left:1316.31px;top:490.57px;font-size:13.5px;color:#000000;transform:scaleX(0.9194);">USO</div>
<div class="t" style="left:59.30px;top:510.57px;font-size:13.5px;color:#000000;transform:scaleX(0.9390);">14</div>
<div class="t" style="left:132.10px;top:510.57px;font-size:13.5px;color:#000000;transform:scaleX(0.9390);">750101</div>
<div class="t" style="left:187.95px;top:510.57px;font-size:13.5px;color:#000000;transform:scaleX(0.9390);">541210012</div>
<div class="t" style="left:255.60px;top:510.57px;font-size:13.5px;color:#000000;transform:scaleX(1.0194);">Obra</div>
<div class="t" style="left:340.60px;top:510.57px;font-size:13.5px;color:#000000;transform:scaleX(0.9807);">NO</div>
<div class="t" style="left:426.60px;top:510.57px;font-size:13.5px;color:#000000;transform:scaleX(1.0295);">Proyecto de Inversión</div>
<div class="t" style="left:577.60px;top:510.57px;font-size:13.5px;color:#000000;transform:scaleX(0.9807);">NO</div>
<div class="t" style="left:790.60px;top:510.57px;font-size:13.5px;color:#000000;transform:scaleX(1.0606);">Menor cuantia</div>
<div class="t" style="left:924.60px;top:510.57px;font-size:13.5px;color:#000000;transform:scaleX(1.0149);">Común</div>
<div class="t" style="left:1039.60px;top:510.57px;font-size:13.5px;color:#000000;transform:scaleX(1.0288);">Construcción</div>
<div class="t" style="left:1124.11px;top:510.57px;font-size:13.5px;color:#000000;transform:scaleX(1.0239);">y</div>
<div class="t" style="left:1134.47px;top:510.57px;font-size:13.5px;color:#000000;transform:scaleX(1.0863);">mantenimiento</div>
<div class="t" style="left:1234.11px;top:510.57px;font-size:13.5px;color:#000000;transform:scaleX(1.0394);">de</div>
<div class="t" style="left:1253.16px;top:510.57px;font-size:13.5px;color:#000000;transform:scaleX(1.0066);">sistemas</div>
<div class="t" style="left:1310.23px;top:510.57px;font-size:13.5px;color:#000000;transform:scaleX(1.0344);">para</div>
<div class="t" style="left:1341.62px;top:510.57px;font-size:13.5px;color:#000000;transform:scaleX(1.0394);">de</div>
<div class="t" style="left:59.30px;top:530.57px;font-size:13.5px;color:#000000;transform:scaleX(0.9390);">15</div>
<div class="t" style="left:132.10px;top:530.57px;font-size:13.5px;color:#000000;transform:scaleX(0.9390);">750101</div>
<div class="t" style="left:187.95px;top:530.57px;font-size:13.5px;color:#000000;transform:scaleX(0.9531);">543410011</div>
<div class="t" style="left:255.60px;top:530.57px;font-size:13.5px;color:#000000;transform:scaleX(1.0194);">Obra</div>
<div class="t" style="left:340.60px;top:530.57px;font-size:13.5px;color:#000000;transform:scaleX(0.9807);">NO</div>
<div class="t" style="left:426.60px;top:530.57px;font-size:13.5px;color:#000000;transform:scaleX(1.0295);">Proyecto de Inversión</div>
<div class="t" style="left:577.60px;top:530.57px;font-size:13.5px;color:#000000;transform:scaleX(0.9807);">NO</div>
<div class="t" style="left:790.60px;top:530.57px;font-size:13.5px;color:#000000;transform:scaleX(1.0606);">Menor cuantia</div>
<div class="t" style="left:924.60px;top:530.57px;font-size:13.5px;color:#000000;transform:scaleX(1.0149);">Común</div>
<div class="t" style="left:1039.60px;top:530.57px;font-size:13.5px;color:#000000;transform:scaleX(1.0421);">Puebloviejo</div>
<div class="t" style="left:1115.79px;top:530.57px;font-size:13.5px;color:#000000;transform:scaleX(0.9067);">PERFORACIÓN</div>
<div class="t" style="left:1209.01px;top:530.57px;font-size:13.5px;color:#000000;transform:scaleX(0.8973);">DE</div>
<div class="t" style="left:1229.29px;top:530.57px;font-size:13.5px;color:#000000;transform:scaleX(0.9209);">POZO</div>
<div class="t" style="left:1267.96px;top:530.57px;font-size:13.5px;color:#000000;transform:scaleX(0.9373);">PROFUNDO</div>
<div class="t" style="left:1343.82px;top:530.57px;font-size:13.5px;color:#000000;transform:scaleX(0.8973);">DE</div>
<div class="t" style="left:59.30px;top:550.57px;font-size:13.5px;color:#000000;transform:scaleX(0.9390);">16</div>
<div class="t" style="left:132.10px;top:550.57px;font-size:13.5px;color:#000000;transform:scaleX(0.9603);">731411</div>
<div class="t" style="left:187.95px;top:550.57px;font-size:13.5px;color:#000000;transform:scaleX(0.9390);">449221013</div>
<div class="t" style="left:255.60px;top:550.57px;font-size:13.5px;color:#000000;transform:scaleX(1.0098);">Bien</div>
<div class="t" style="left:340.60px;top:550.57px;font-size:13.5px;color:#000000;transform:scaleX(0.9807);">NO</div>
<div class="t" style="left:426.60px;top:550.57px;font-size:13.5px;color:#000000;transform:scaleX(1.0295);">Proyecto de Inversión</div>
<div class="t" style="left:577.60px;top:550.57px;font-size:13.5px;color:#000000;transform:scaleX(0.9807);">NO</div>
<div class="t" style="left:790.60px;top:550.57px;font-size:13.5px;color:#000000;transform:scaleX(1.0241);">Infima Cuantía</div>
<div class="t" style="left:924.60px;top:550.57px;font-size:13.5px;color:#000000;transform:scaleX(1.0149);">Común</div>
<div class="t" style="left:1039.60px;top:550.57px;font-size:13.5px;color:#000000;transform:scaleX(0.9596);">Egresos</div>
<div class="t" style="left:1090.57px;top:550.57px;font-size:13.5px;color:#000000;transform:scaleX(1.0344);">para</div>
<div class="t" style="left:1121.97px;top:550.57px;font-size:13.5px;color:#000000;transform:scaleX(1.0294);">la</div>
<div class="t" style="left:1136.24px;top:550.57px;font-size:13.5px;color:#000000;transform:scaleX(1.0412);">adquisición</div>
<div class="t" style="left:1210.02px;top:550.57px;font-size:13.5px;color:#000000;transform:scaleX(1.0394);">de</div>
<div class="t" style="left:1229.07px;top:550.57px;font-size:13.5px;color:#000000;transform:scaleX(1.0478);">partes</div>
<div class="t" style="left:1271.84px;top:550.57px;font-size:13.5px;color:#000000;transform:scaleX(1.0239);">y</div>
<div class="t" style="left:1282.20px;top:550.57px;font-size:13.5px;color:#000000;transform:scaleX(1.0394);">repuestos</div>
<div class="t" style="left:59.30px;top:570.57px;font-size:13.5px;color:#000000;transform:scaleX(0.9390);">17</div>
<div class="t" style="left:132.10px;top:570.57px;font-size:13.5px;color:#000000;transform:scaleX(0.9390);">731408</div>
<div class="t" style="left:180.90px;top:570.57px;font-size:13.5px;color:#000000;transform:scaleX(0.9517);">5327000117</div>
<div class="t" style="left:255.60px;top:570.57px;font-size:13.5px;color:#000000;transform:scaleX(1.0098);">Bien</div>
<div class="t" style="left:340.60px;top:570.57px;font-size:13.5px;color:#000000;transform:scaleX(0.9807);">NO</div>
<div class="t" style="left:426.60px;top:570.57px;font-size:13.5px;color:#000000;transform:scaleX(1.0295);">Proyecto de Inversión</div>
<div class="t" style="left:577.60px;top:570.57px;font-size:13.5px;color:#000000;transform:scaleX(0.9807);">NO</div>
<div class="t" style="left:790.60px;top:570.57px;font-size:13.5px;color:#000000;transform:scaleX(1.0241);">Infima Cuantía</div>
<div class="t" style="left:924.60px;top:570.57px;font-size:13.5px;color:#000000;transform:scaleX(1.0149);">Común</div>
<div class="t" style="left:1039.60px;top:570.57px;font-size:13.5px;color:#000000;transform:scaleX(1.0408);">Adquisición</div>
<div class="t" style="left:1114.91px;top:570.57px;font-size:13.5px;color:#000000;transform:scaleX(1.0394);">de</div>
<div class="t" style="left:1133.96px;top:570.57px;font-size:13.5px;color:#000000;transform:scaleX(1.0228);">bienes</div>
<div class="t" style="left:1178.10px;top:570.57px;font-size:13.5px;color:#000000;transform:scaleX(1.0677);">deportivos</div>
<div class="t" style="left:1248.05px;top:570.57px;font-size:13.5px;color:#000000;transform:scaleX(1.0344);">para</div>
<div class="t" style="left:1279.45px;top:570.57px;font-size:13.5px;color:#000000;transform:scaleX(1.0570);">el</div>
<div class="t" style="left:1294.01px;top:570.57px;font-size:13.5px;color:#000000;transform:scaleX(1.0716);">proyecto</div>
<div class="t" style="left:59.30px;top:590.57px;font-size:13.5px;color:#000000;transform:scaleX(0.9390);">18</div>
<div class="t" style="left:132.10px;top:590.57px;font-size:13.5px;color:#000000;transform:scaleX(0.9390);">731406</div>
<div class="t" style="left:187.95px;top:590.57px;font-size:13.5px;color:#000000;transform:scaleX(0.9390);">447500039</div>
<div class="t" style="left:255.60px;top:590.57px;font-size:13.5px;color:#000000;transform:scaleX(1.0098);">Bien</div>
<div class="t" style="left:340.60px;top:590.57px;font-size:13.5px;color:#000000;transform:scaleX(0.9807);">NO</div>
<div class="t" style="left:426.60px;top:590.57px;font-size:13.5px;color:#000000;transform:scaleX(1.0295);">Proyecto de Inversión</div>
<div class="t" style="left:577.60px;top:590.57px;font-size:13.5px;color:#000000;transform:scaleX(0.9807);">NO</div>
<div class="t" style="left:790.60px;top:590.57px;font-size:13.5px;color:#000000;transform:scaleX(1.0241);">Infima Cuantía</div>
<div class="t" style="left:924.60px;top:590.57px;font-size:13.5px;color:#000000;transform:scaleX(1.0149);">Común</div>
<div class="t" style="left:1039.60px;top:590.57px;font-size:13.5px;color:#000000;transform:scaleX(0.9596);">Egresos</div>
<div class="t" style="left:1090.57px;top:590.57px;font-size:13.5px;color:#000000;transform:scaleX(1.0344);">para</div>
<div class="t" style="left:1121.97px;top:590.57px;font-size:13.5px;color:#000000;transform:scaleX(1.0294);">la</div>
<div class="t" style="left:1136.24px;top:590.57px;font-size:13.5px;color:#000000;transform:scaleX(1.0412);">adquisición</div>
<div class="t" style="left:1210.02px;top:590.57px;font-size:13.5px;color:#000000;transform:scaleX(1.0394);">de</div>
<div class="t" style="left:1229.07px;top:590.57px;font-size:13.5px;color:#000000;transform:scaleX(1.0567);">herramientas</div>
<div class="t" style="left:1315.78px;top:590.57px;font-size:13.5px;color:#000000;transform:scaleX(1.0239);">y</div>
<div class="t" style="left:1326.14px;top:590.57px;font-size:13.5px;color:#000000;transform:scaleX(1.0391);">equipos</div>
<div class="t" style="left:59.30px;top:610.57px;font-size:13.5px;color:#000000;transform:scaleX(0.9390);">19</div>
<div class="t" style="left:132.10px;top:610.57px;font-size:13.5px;color:#000000;transform:scaleX(0.9390);">731403</div>
<div class="t" style="left:187.95px;top:610.57px;font-size:13.5px;color:#000000;transform:scaleX(0.9390);">325500016</div>
<div class="t" style="left:255.60px;top:610.57px;font-size:13.5px;color:#000000;transform:scaleX(1.0110);">Bien.</div>
<div class="t" style="left:340.60px;top:610.57px;font-size:13.5px;color:#000000;transform:scaleX(0.9807);">NO</div>
<div class="t" style="left:426.60px;top:610.57px;font-size:13.5px;color:#000000;transform:scaleX(1.0295);">Proyecto de Inversión</div>
<div class="t" style="left:577.60px;top:610.57px;font-size:13.5px;color:#000000;transform:scaleX(0.9807);">NO</div>
<div class="t" style="left:790.60px;top:610.57px;font-size:13.5px;color:#000000;transform:scaleX(1.0241);">Infima Cuantía</div>
<div class="t" style="left:924.60px;top:610.57px;font-size:13.5px;color:#000000;transform:scaleX(1.0149);">Común</div>
<div class="t" style="left:1039.60px;top:610.57px;font-size:13.5px;color:#000000;transform:scaleX(1.0408);">Adquisicion</div>
<div class="t" style="left:1114.91px;top:610.57px;font-size:13.5px;color:#000000;transform:scaleX(1.0394);">de</div>
<div class="t" style="left:1133.96px;top:610.57px;font-size:13.5px;color:#000000;transform:scaleX(1.0813);">Mobiliarios</div>
<div class="t" style="left:1207.18px;top:610.57px;font-size:13.5px;color:#000000;transform:scaleX(0.9326);">LINEA</div>
<div class="t" style="left:1247.02px;top:610.57px;font-size:13.5px;color:#000000;transform:scaleX(0.9092);">GRAFICA</div>
<div class="t" style="left:1305.02px;top:610.57px;font-size:13.5px;color:#000000;transform:scaleX(0.9344);">BANNER</div>
<div class="t" style="left:59.30px;top:630.57px;font-size:13.5px;color:#000000;transform:scaleX(0.9390);">20</div>
<div class="t" style="left:132.10px;top:630.57px;font-size:13.5px;color:#000000;transform:scaleX(0.9390);">731403</div>
<div class="t" style="left:180.90px;top:630.57px;font-size:13.5px;color:#000000;transform:scaleX(0.9647);">3812100111</div>
<div class="t" style="left:255.60px;top:630.57px;font-size:13.5px;color:#000000;transform:scaleX(1.0098);">Bien</div>
<div class="t" style="left:340.60px;top:630.57px;font-size:13.5px;color:#000000;transform:scaleX(0.9807);">NO</div>
<div class="t" style="left:426.60px;top:630.57px;font-size:13.5px;color:#000000;transform:scaleX(1.0295);">Proyecto de Inversión</div>
<div class="t" style="left:577.60px;top:630.57px;font-size:13.5px;color:#000000;transform:scaleX(0.9807);">NO</div>
<div class="t" style="left:790.60px;top:630.57px;font-size:13.5px;color:#000000;transform:scaleX(1.0241);">Infima Cuantía</div>
<div class="t" style="left:924.60px;top:630.57px;font-size:13.5px;color:#000000;transform:scaleX(1.0149);">Común</div>
<div class="t" style="left:1039.60px;top:630.57px;font-size:13.5px;color:#000000;transform:scaleX(1.0408);">Adquisición</div>
<div class="t" style="left:1114.91px;top:630.57px;font-size:13.5px;color:#000000;transform:scaleX(1.0394);">de</div>
<div class="t" style="left:1133.96px;top:630.57px;font-size:13.5px;color:#000000;transform:scaleX(0.9920);">sillas</div>
<div class="t" style="left:1167.18px;top:630.57px;font-size:13.5px;color:#000000;transform:scaleX(1.0117);">plásticas</div>
<div class="t" style="left:1223.76px;top:630.57px;font-size:13.5px;color:#000000;transform:scaleX(1.0239);">y</div>
<div class="t" style="left:1234.12px;top:630.57px;font-size:13.5px;color:#000000;transform:scaleX(0.9815);">mesas</div>
<div class="t" style="left:1276.60px;top:630.57px;font-size:13.5px;color:#000000;transform:scaleX(1.1334);">tipo</div>
<div class="t" style="left:1304.72px;top:630.57px;font-size:13.5px;color:#000000;transform:scaleX(1.0364);">maletas</div>
<div class="t" style="left:59.30px;top:650.57px;font-size:13.5px;color:#000000;transform:scaleX(0.9390);">21</div>
<div class="t" style="left:132.10px;top:650.57px;font-size:13.5px;color:#000000;transform:scaleX(0.9390);">730827</div>
<div class="t" style="left:187.95px;top:650.57px;font-size:13.5px;color:#000000;transform:scaleX(0.9390);">624330013</div>
<div class="t" style="left:255.60px;top:650.57px;font-size:13.5px;color:#000000;transform:scaleX(1.0098);">Bien</div>
<div class="t" style="left:340.60px;top:650.57px;font-size:13.5px;color:#000000;transform:scaleX(0.9807);">NO</div>
<div class="t" style="left:426.60px;top:650.57px;font-size:13.5px;color:#000000;transform:scaleX(1.0295);">Proyecto de Inversión</div>
<div class="t" style="left:577.60px;top:650.57px;font-size:13.5px;color:#000000;transform:scaleX(0.9807);">NO</div>
<div class="t" style="left:790.60px;top:650.57px;font-size:13.5px;color:#000000;transform:scaleX(1.0241);">Infima Cuantía</div>
<div class="t" style="left:924.60px;top:650.57px;font-size:13.5px;color:#000000;transform:scaleX(1.0149);">Común</div>
<div class="t" style="left:1039.60px;top:650.57px;font-size:13.5px;color:#000000;transform:scaleX(1.0573);">Vestuario</div>
<div class="t" style="left:1102.56px;top:650.57px;font-size:13.5px;color:#000000;transform:scaleX(1.0339);">con</div>
<div class="t" style="left:1128.52px;top:650.57px;font-size:13.5px;color:#000000;transform:scaleX(1.0722);">identificación</div>
<div class="t" style="left:1215.65px;top:650.57px;font-size:13.5px;color:#000000;transform:scaleX(1.0394);">de</div>
<div class="t" style="left:1234.70px;top:650.57px;font-size:13.5px;color:#000000;transform:scaleX(1.0294);">la</div>
<div class="t" style="left:1248.97px;top:650.57px;font-size:13.5px;color:#000000;transform:scaleX(1.0867);">institución</div>
<div class="t" style="left:1317.66px;top:650.57px;font-size:13.5px;color:#000000;transform:scaleX(1.0344);">para</div>
<div class="t" style="left:59.30px;top:670.57px;font-size:13.5px;color:#000000;transform:scaleX(0.9390);">22</div>
<div class="t" style="left:132.10px;top:670.57px;font-size:13.5px;color:#000000;transform:scaleX(0.9390);">730827</div>
<div class="t" style="left:187.95px;top:670.57px;font-size:13.5px;color:#000000;transform:scaleX(0.9531);">384400911</div>
<div class="t" style="left:255.60px;top:670.57px;font-size:13.5px;color:#000000;transform:scaleX(1.0098);">Bien</div>
<div class="t" style="left:340.60px;top:670.57px;font-size:13.5px;color:#000000;transform:scaleX(0.9807);">NO</div>
<div class="t" style="left:426.60px;top:670.57px;font-size:13.5px;color:#000000;transform:scaleX(1.0295);">Proyecto de Inversión</div>
<div class="t" style="left:577.60px;top:670.57px;font-size:13.5px;color:#000000;transform:scaleX(0.8463);">SI</div>
<div class="t" style="left:790.60px;top:670.57px;font-size:13.5px;color:#000000;transform:scaleX(1.0192);">Catalogo Electrónico</div>
<div class="t" style="left:924.60px;top:670.57px;font-size:13.5px;color:#000000;transform:scaleX(1.0149);">Común</div>
<div class="t" style="left:1039.60px;top:670.57px;font-size:13.5px;color:#000000;transform:scaleX(1.0580);">Uniformes</div>
<div class="t" style="left:1108.13px;top:670.57px;font-size:13.5px;color:#000000;transform:scaleX(1.0339);">con</div>
<div class="t" style="left:1134.09px;top:670.57px;font-size:13.5px;color:#000000;transform:scaleX(1.0722);">identificación</div>
<div class="t" style="left:1221.22px;top:670.57px;font-size:13.5px;color:#000000;transform:scaleX(1.0394);">de</div>
<div class="t" style="left:1240.27px;top:670.57px;font-size:13.5px;color:#000000;transform:scaleX(1.0294);">la</div>
<div class="t" style="left:1254.54px;top:670.57px;font-size:13.5px;color:#000000;transform:scaleX(1.0867);">institución</div>
<div class="t" style="left:1323.22px;top:670.57px;font-size:13.5px;color:#000000;transform:scaleX(1.0344);">para</div>
</div>
<div class="r" style="left:5px;top:171px;width:102px;height:26px;background:#FFFFFF;box-sizing:border-box;border:1px solid #C6C6C6;"></div>
<div class="t" style="left:12.00px;top:177.70px;font-size:13px;color:#333333;transform:scaleX(0.9327);">D3</div>
<svg class="s" style="left:92px;top:181px;" width="9" height="5" viewBox="0 0 9 5"><path d="M0 0h8.5l-4.25 4.5z" fill="#666"/></svg>
<div class="r" style="left:121px;top:179px;width:2px;height:2px;background:#999;"></div>
<div class="r" style="left:121px;top:183px;width:2px;height:2px;background:#999;"></div>
<div class="r" style="left:121px;top:187px;width:2px;height:2px;background:#999;"></div>
<div class="r" style="left:137px;top:171px;width:110px;height:26px;background:#FFFFFF;box-sizing:border-box;border:1px solid #C6C6C6;"></div>
<svg class="s" style="left:150px;top:179px;" width="12" height="11" viewBox="0 0 12 11"><path d="M1 1l9.5 9.5M10.5 1L1 10.5" stroke="#ABABAB" stroke-width="1.3"/></svg>
<svg class="s" style="left:185px;top:179px;" width="14" height="11" viewBox="0 0 14 11"><path d="M1 6l4 4l8-9" fill="none" stroke="#ABABAB" stroke-width="2"/></svg>
<svg class="s" style="left:221px;top:179px;" width="16" height="14" viewBox="0 0 16 14"><text x="1" y="10.5" font-family="Liberation Serif" font-style="italic" font-weight="bold" font-size="13" fill="#444">f</text><text x="6.5" y="11" font-family="Liberation Serif" font-style="italic" font-weight="bold" font-size="9.5" fill="#444">x</text></svg>
<div class="r" style="left:250px;top:171px;width:1110px;height:26px;background:#FFFFFF;box-sizing:border-box;border:1px solid #C6C6C6;"></div>
<div class="t" style="left:262.50px;top:177.70px;font-size:13px;color:#333333;transform:scaleX(1.0377);">Bien</div>
<svg class="s" style="left:1349px;top:180px;" width="10" height="6" viewBox="0 0 10 6"><path d="M1 1l4 4l4-4" fill="none" stroke="#444" stroke-width="1.2"/></svg>
<div class="r" style="left:1345px;top:207px;width:21px;height:471px;background:#EDEDED;"></div>
<div class="r" style="left:1344px;top:207px;width:1px;height:471px;background:#ABABAB;"></div>
<div class="r" style="left:1363px;top:207px;width:3px;height:471px;background:#E3E3E3;"></div>
<div class="r" style="left:1348px;top:209px;width:15px;height:15px;background:#FFFFFF;box-sizing:border-box;border:1px solid #A6A6A6;"></div>
<svg class="s" style="left:1352px;top:214px;" width="7" height="4" viewBox="0 0 7 4"><path d="M0 4h7L3.5 0z" fill="#222"/></svg>
<div class="r" style="left:1348px;top:224px;width:15px;height:87px;background:#FFFFFF;box-sizing:border-box;border:1px solid #A6A6A6;"></div>
<div class="r" style="left:0px;top:678px;width:1366px;height:28px;background:#E6E6E6;"></div>
<div class="r" style="left:0px;top:678px;width:1345px;height:1px;background:#ABABAB;"></div>
<svg class="s" style="left:24px;top:686px;" width="8" height="11" viewBox="0 0 8 11"><path d="M6.5 1L2 5.5L6.5 10z" fill="#BDBDBD"/></svg>
<svg class="s" style="left:54px;top:686px;" width="8" height="11" viewBox="0 0 8 11"><path d="M1.5 1L6 5.5L1.5 10z" fill="#BDBDBD"/></svg>
<div class="r" style="left:100px;top:678px;width:49px;height:25px;background:#FFFFFF;box-sizing:border-box;border-left:1px solid #ABABAB;border-right:1px solid #ABABAB;"></div>
<div class="r" style="left:100px;top:701px;width:49px;height:2px;background:#217346;"></div>
<div class="t" style="left:112.80px;top:684.45px;font-size:14px;color:#217346;font-weight:bold;transform:scaleX(0.7882);">CPC</div>
<div class="t" style="left:161.70px;top:684.80px;font-size:13px;color:#444444;transform:scaleX(0.9178);">DATOS</div>
<div class="r" style="left:215px;top:682px;width:1px;height:20px;background:#ABABAB;"></div>
<svg class="s" style="left:249px;top:683px;" width="17" height="17" viewBox="0 0 17 17"><circle cx="8.2" cy="8.2" r="7.3" fill="none" stroke="#666" stroke-width="1.2"/><path d="M8.2 4.5v7.4M4.5 8.2h7.4" stroke="#666" stroke-width="1.5"/></svg>
<div class="r" style="left:1348px;top:664px;width:15px;height:15px;background:#FFFFFF;box-sizing:border-box;border:1px solid #A6A6A6;"></div>
<svg class="s" style="left:1352px;top:670px;" width="7" height="4" viewBox="0 0 7 4"><path d="M0 0h7L3.5 4z" fill="#222"/></svg>
<div class="r" style="left:819px;top:688px;width:2px;height:2px;background:#BDBDBD;"></div>
<div class="r" style="left:819px;top:692px;width:2px;height:2px;background:#BDBDBD;"></div>
<div class="r" style="left:819px;top:696px;width:2px;height:2px;background:#BDBDBD;"></div>
<div class="r" style="left:836px;top:685px;width:15px;height:15px;background:#FFFFFF;box-sizing:border-box;border:1px solid #A6A6A6;"></div>
<svg class="s" style="left:841px;top:689px;" width="4" height="7" viewBox="0 0 4 7"><path d="M4 0v7L0 3.5z" fill="#222"/></svg>
<div class="r" style="left:850px;top:685px;width:326px;height:15px;background:#FFFFFF;box-sizing:border-box;border:1px solid #A6A6A6;"></div>
<div class="r" style="left:1330px;top:685px;width:15px;height:15px;background:#FFFFFF;box-sizing:border-box;border:1px solid #A6A6A6;"></div>
<svg class="s" style="left:1336px;top:689px;" width="4" height="7" viewBox="0 0 4 7"><path d="M0 0v7l4-3.5z" fill="#222"/></svg>
<div class="r" style="left:0px;top:706px;width:1366px;height:22px;background:#F3F2F1;"></div>
<div class="r" style="left:0px;top:706px;width:1366px;height:1px;background:#D2D0CE;"></div>
<div class="t" style="left:7.70px;top:712.14px;font-size:12px;color:#444444;transform:scaleX(0.8916);">Listo</div>
<svg class="s" style="left:50px;top:710px;" width="17" height="15" viewBox="0 0 17 15"><path d="M4.5 12.5H1.5V1.5h13V5" fill="none" stroke="#333" stroke-width="1.1"/><path d="M1.5 3h13" stroke="#333" stroke-width="1.3"/><path d="M3 5.8h3M3 7.6h2M3 9.4h2" stroke="#333" stroke-width="1"/><circle cx="10.4" cy="9.4" r="3.8" fill="#F3F2F1" stroke="#333" stroke-width="1.1"/><rect x="9.2" y="8.2" width="2.4" height="2.4" fill="#333"/></svg>
<svg class="s" style="left:82px;top:709px;" width="17" height="16" viewBox="0 0 17 16"><circle cx="6.9" cy="2.7" r="1.6" fill="none" stroke="#333" stroke-width="1"/><path d="M1.5 5.2C3 7.5 5 7.3 6.9 6.6C8.8 7.3 10.8 7.5 12.3 5.2M5.6 7L4.8 13.8M8.2 7L7.6 10.5" fill="none" stroke="#333" stroke-width="1.1"/><path d="M8.7 8.4L14.8 14.6M14.8 8.4L8.7 14.6" stroke="#333" stroke-width="1"/></svg>
<div class="t" style="left:101.50px;top:712.14px;font-size:12px;color:#444444;transform:scaleX(0.9451);">Accesibilidad: es necesario investigar</div>
<div class="r" style="left:1067px;top:707px;width:39px;height:21px;background:#D6D6D6;"></div>
<svg class="s" style="left:1078px;top:709px;" width="16" height="15" viewBox="0 0 16 15"><g fill="none" stroke="#333" stroke-width="1.1"><rect x="1.5" y="1.5" width="12" height="12"/><path d="M1.5 5.5h12M1.5 9.5h12M5.5 1.5v12M9.5 1.5v12"/></g></svg>
<svg class="s" style="left:1118px;top:709px;" width="16" height="15" viewBox="0 0 16 15"><g fill="none" stroke="#333" stroke-width="1.1"><rect x="1.5" y="1.5" width="13" height="12"/><rect x="4.5" y="3.5" width="7" height="8"/><path d="M6 5.5h4M6 7.5h4M6 9.5h4"/></g></svg>
<svg class="s" style="left:1157px;top:709px;" width="18" height="15" viewBox="0 0 18 15"><g fill="none" stroke="#333" stroke-width="1.1"><rect x="2.5" y="1.5" width="13" height="12"/><path d="M6.5 1.5v7M10.5 1.5v7M2.5 8.5h8"/></g></svg>
<div class="r" style="left:1191px;top:716px;width:9px;height:1px;background:#555;"></div>
<div class="r" style="left:1205px;top:716px;width:100px;height:1px;background:#888;"></div>
<div class="r" style="left:1253px;top:711px;width:4px;height:11px;background:#444;"></div>
<div class="r" style="left:1309px;top:716px;width:9px;height:1px;background:#555;"></div>
<div class="r" style="left:1313px;top:712px;width:1px;height:9px;background:#555;"></div>
<div class="t" style="left:1331.30px;top:712.14px;font-size:12px;color:#444444;transform:scaleX(0.8667);">100%</div>
<div class="r" style="left:0px;top:728px;width:1366px;height:5px;background:#1C2B36;"></div>
<div class="r" style="left:491px;top:728px;width:48px;height:5px;background:#4A5A66;"></div>
</body></html>
